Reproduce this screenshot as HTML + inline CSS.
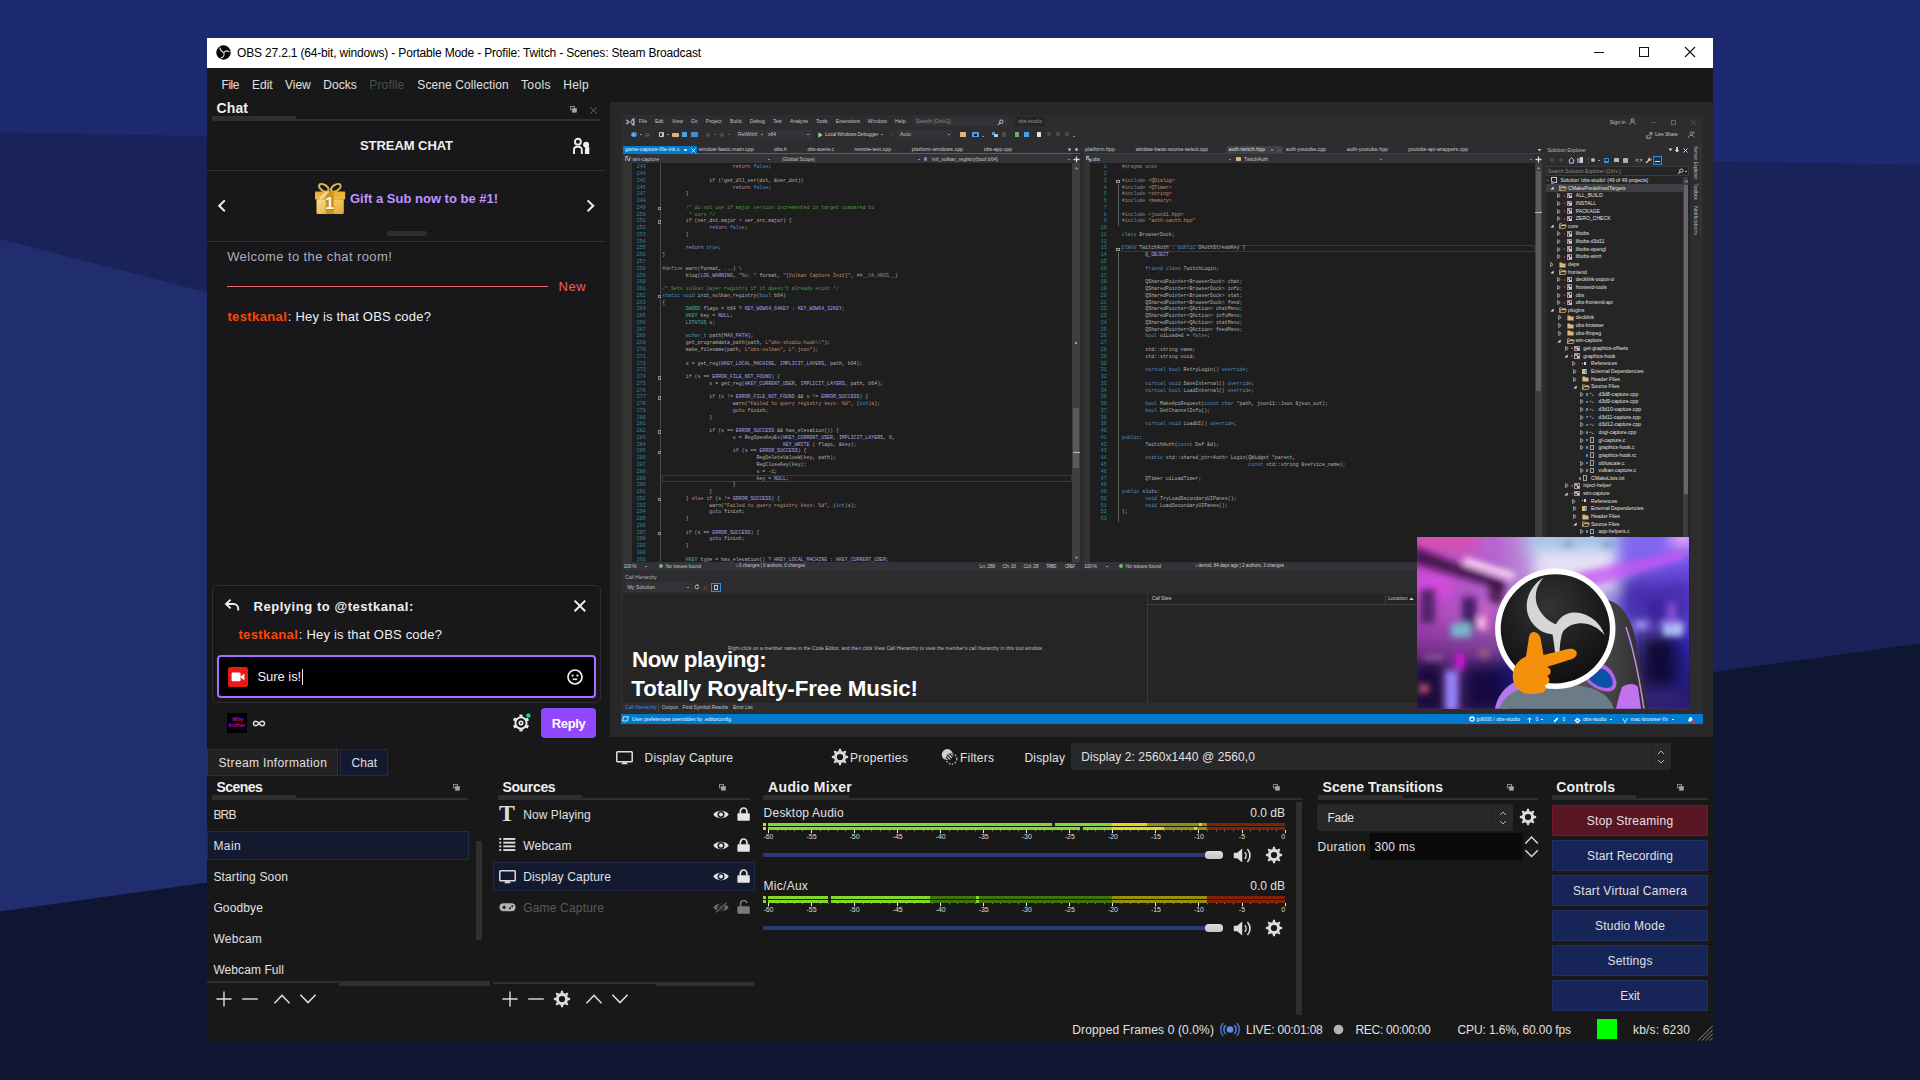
<!DOCTYPE html>
<html lang="en"><head><meta charset="utf-8"><title>OBS 27.2.1 - Twitch chat reply</title>
<style>
html,body{margin:0;padding:0;}
body{width:1920px;height:1080px;position:relative;overflow:hidden;background:#1d2970;font-family:'Liberation Sans',sans-serif;}
body div,body span.t,body svg,body pre{position:absolute;}
.t{white-space:pre;display:block;}
pre{margin:0;}
pre.code{font:4.92px/6.770px 'Liberation Mono',monospace;color:#b4b4b4;tab-size:8;-moz-tab-size:8;overflow:hidden;white-space:pre;}
pre.code i{font-style:normal;}
pre.ln{color:#2b8aa8;text-align:right;}
.cm{color:#4f9a44;}.st{color:#c08f7a;}.pp{color:#8a8a8a;}.kw{color:#4f8fc4;}.ct{color:#b88fc0;}.ty{color:#45b39c;}.mc{color:#aaa4e6;}.fn{color:#c4c49a;}.id{color:#bdbdbd;}.nu{color:#a5bc98;}

</style></head><body>
<svg width="1920" height="1080" style="left:0;top:0">
<rect width="1920" height="1080" fill="#1d2970"/>
<polygon points="0,132.6 1920,164.7 1920,1080 0,1080" fill="#19235a"/>
<polygon points="0,239 1100,523 1100,1080 0,1080" fill="#202d6e"/>
<polygon points="0,911.5 1920,643.3 1920,1080 0,1080" fill="#0e1631"/>
</svg>
<div style="left:207px;top:38px;width:1506px;height:30px;background:#fff;"></div>
<div style="left:207px;top:68px;width:1506px;height:973px;background:#181819;"></div>
<svg style="left:215.5px;top:44.5px" width="15" height="15" viewBox="-7.5 -7.5 15 15"><circle r="7.2" fill="#050505"/>
<g fill="none" stroke="#d8d8d8" stroke-width="1.1" stroke-linecap="round"><path d="M-3.6,-4.6 C-3.2,-1.8 -1.5,-0.6 0.3,0.2"/><path d="M5.6,-0.8 C3,-2.4 1.4,-1.4 0.3,0.2"/><path d="M-2.4,5.4 C0.6,4.6 0.9,2.2 0.3,0.2"/></g></svg>
<span class="t" style="left:237px;top:46.84px;font:400 12px/1 'Liberation Sans',sans-serif;color:#000;letter-spacing:-0.175px;">OBS 27.2.1 (64-bit, windows) - Portable Mode - Profile: Twitch - Scenes: Steam Broadcast</span>
<div style="left:1594px;top:52px;width:10px;height:1px;background:#111;"></div>
<div style="left:1639px;top:47px;width:10px;height:10px;background:transparent;box-sizing:border-box;border:1px solid #111;"></div>
<svg style="left:1684px;top:46px" width="12" height="12"><path d="M1,1 L11,11 M11,1 L1,11" stroke="#111" stroke-width="1.1" fill="none"/></svg>
<span class="t" style="left:221.5px;top:78.84px;font:400 12px/1 'Liberation Sans',sans-serif;color:#e1e0e1;letter-spacing:-0.441px;">File</span>
<span class="t" style="left:252px;top:78.84px;font:400 12px/1 'Liberation Sans',sans-serif;color:#e1e0e1;">Edit</span>
<span class="t" style="left:285px;top:78.84px;font:400 12px/1 'Liberation Sans',sans-serif;color:#e1e0e1;letter-spacing:-0.028px;">View</span>
<span class="t" style="left:323.3px;top:78.84px;font:400 12px/1 'Liberation Sans',sans-serif;color:#e1e0e1;letter-spacing:0.012px;">Docks</span>
<span class="t" style="left:369.3px;top:78.84px;font:400 12px/1 'Liberation Sans',sans-serif;color:#4e4e4e;letter-spacing:0.151px;">Profile</span>
<span class="t" style="left:417.3px;top:78.84px;font:400 12px/1 'Liberation Sans',sans-serif;color:#e1e0e1;letter-spacing:0.086px;">Scene Collection</span>
<span class="t" style="left:521px;top:78.84px;font:400 12px/1 'Liberation Sans',sans-serif;color:#e1e0e1;letter-spacing:0.374px;">Tools</span>
<span class="t" style="left:563.3px;top:78.84px;font:400 12px/1 'Liberation Sans',sans-serif;color:#e1e0e1;letter-spacing:0.204px;">Help</span>
<span class="t" style="left:216.5px;top:101.15px;font:700 14px/1 'Liberation Sans',sans-serif;color:#eeeeee;letter-spacing:0.107px;">Chat</span>
<div style="left:212px;top:116px;width:84px;height:5px;background:#2f2f2f;border-radius:1px 0 0 1px;"></div>
<div style="left:294px;top:118.5px;width:307px;height:2.5px;background:#2f2f2f;"></div>
<svg style="left:570px;top:105.5px" width="7" height="7" viewBox="0 0 7 7"><rect x="0.5" y="0.5" width="4" height="3.4" fill="#181819" stroke="#8a8a8a" stroke-width="1"/><rect x="2.5" y="2.6" width="4" height="3.6" fill="#a5a5a5" stroke="#a5a5a5" stroke-width="0.6"/></svg>
<svg style="left:589.5px;top:106.5px" width="7" height="7" viewBox="0 0 7 7"><path d="M0.5,0.5 L6.5,6.5 M6.5,0.5 L0.5,6.5" stroke="#6a6a6a" stroke-width="1" fill="none"/></svg>
<div style="left:207px;top:122px;width:399px;height:626px;background:#18181b;"></div>
<div style="left:207px;top:170px;width:399px;height:1px;background:#303034;"></div>
<div style="left:207px;top:241px;width:399px;height:1px;background:#303034;"></div>
<span class="t" style="left:360px;top:139px;font:700 13px/1 'Liberation Sans',sans-serif;color:#efeff1;letter-spacing:-0.061px;">STREAM CHAT</span>
<svg style="left:572px;top:137px" width="19" height="18" viewBox="0 0 19 18" fill="none" stroke="#efeff1" stroke-width="1.900">
<circle cx="5.900" cy="4.700" r="2.950"/><path d="M2,16.900 V12.800 a3.100,3.100 0 0 1 3.100,-3.100 h1.600 a3.100,3.100 0 0 1 3.100,3.100 V16.900"/>
<circle cx="14.100" cy="7.700" r="3" fill="#efeff1" stroke="none"/><path d="M12.900,16.900 V12 L14,10 h3.300 V16.900 Z" fill="#efeff1" stroke="none"/></svg>
<svg style="left:216px;top:198px" width="12" height="16" viewBox="0 0 12 16"><path d="M8.8,2.4 L3.2,7.8 L8.8,13.2" stroke="#efeff1" stroke-width="2" fill="none"/></svg>
<svg style="left:584px;top:198px" width="12" height="16" viewBox="0 0 12 16"><path d="M3.6,2.4 L9.2,7.8 L3.6,13.2" stroke="#efeff1" stroke-width="2" fill="none"/></svg>
<svg style="left:313px;top:182px" width="34" height="34" viewBox="0 0 34 34">
<defs><linearGradient id="gg" x1="0" y1="0" x2="1" y2="1"><stop offset="0" stop-color="#f8dc98"/><stop offset=".5" stop-color="#eec458"/><stop offset="1" stop-color="#e0a62c"/></linearGradient>
<linearGradient id="gl" x1="0" y1="0" x2="0" y2="1"><stop offset="0" stop-color="#e4ae38"/><stop offset="1" stop-color="#ecbc48"/></linearGradient></defs>
<g fill="none" stroke="#dcb24c" stroke-width="2.100"><ellipse cx="10.800" cy="5.800" rx="5.400" ry="3" transform="rotate(32 10.800 5.800)"/><ellipse cx="22.800" cy="5.800" rx="5.400" ry="3" transform="rotate(-32 22.800 5.800)"/></g>
<rect x="2" y="9.600" width="30.200" height="7.900" rx="0.800" fill="url(#gl)"/>
<rect x="3.500" y="17.300" width="27.300" height="14.600" rx="0.800" fill="url(#gg)"/>
<rect x="12.800" y="9.600" width="8" height="22.300" fill="#cf9422"/>
<path d="M12.800,9.600 h4 l-10,9 v-3 z" fill="#f8e8b0" opacity=".8"/>
<text x="16.700" y="27.200" font-family="'Liberation Sans',sans-serif" font-weight="700" font-size="16.500" text-anchor="middle" fill="#fffbe8" stroke="#b87a14" stroke-width="1.100" paint-order="stroke">1</text></svg>
<span class="t" style="left:350px;top:192px;font:700 13px/1 'Liberation Sans',sans-serif;color:#bf94ff;">Gift a Sub now to be #1!</span>
<div style="left:387px;top:231.3px;width:40px;height:4.4px;background:#2c2c31;border-radius:2.2px;"></div>
<span class="t" style="left:227.2px;top:250px;font:400 13px/1 'Liberation Sans',sans-serif;color:#adadb8;letter-spacing:0.396px;">Welcome to the chat room!</span>
<div style="left:227px;top:286px;width:320.5px;height:1px;background:#e26a6a;"></div>
<span class="t" style="left:558.5px;top:280px;font:400 13px/1 'Liberation Sans',sans-serif;color:#eb5e5e;letter-spacing:0.594px;">New</span>
<span class="t" style="left:227.4px;top:310px;font:700 13px/1 'Liberation Sans',sans-serif;color:#ff4500;letter-spacing:0.379px;">testkanal</span>
<span class="t" style="left:287.8px;top:310px;font:400 13px/1 'Liberation Sans',sans-serif;color:#efeff1;letter-spacing:0.198px;">: Hey is that OBS code?</span>
<div style="left:212px;top:584.5px;width:388.5px;height:118px;background:#18181b;box-sizing:border-box;border:1px solid #2e2e33;border-radius:6px;"></div>
<svg style="left:224px;top:598px" width="16" height="14" viewBox="0 0 16 14"><path d="M6.6,1.6 L2,6 L6.6,10.4 M2.4,6 H9.6 a4.6,4.6 0 0 1 4.6,4.6 V12.6" stroke="#efeff1" stroke-width="1.9" fill="none"/></svg>
<span class="t" style="left:253.5px;top:600px;font:700 13px/1 'Liberation Sans',sans-serif;color:#efeff1;letter-spacing:0.544px;">Replying to @testkanal:</span>
<svg style="left:573px;top:598.5px" width="14" height="14" viewBox="0 0 14 14"><path d="M1.6,1.6 L12.2,12.2 M12.2,1.6 L1.6,12.2" stroke="#efeff1" stroke-width="2" fill="none"/></svg>
<span class="t" style="left:238.4px;top:627.7px;font:700 13px/1 'Liberation Sans',sans-serif;color:#ff4500;letter-spacing:0.379px;">testkanal</span>
<span class="t" style="left:298.8px;top:627.7px;font:400 13px/1 'Liberation Sans',sans-serif;color:#efeff1;letter-spacing:0.198px;">: Hey is that OBS code?</span>
<div style="left:217.3px;top:655.4px;width:378.3px;height:42.2px;background:#000;box-sizing:border-box;border:2px solid #a970ff;border-radius:4px;"></div>
<div style="left:228px;top:667px;width:19.8px;height:19.8px;background:#e91916;border-radius:2.5px;"></div>
<svg style="left:228px;top:667px" width="20" height="20" viewBox="0 0 20 20"><rect x="3.6" y="5.6" width="9" height="8.6" rx="1.2" fill="#fff"/><path d="M12.2,9.9 L16.4,6.4 V13.4 Z" fill="#fff"/></svg>
<span class="t" style="left:257.4px;top:669.8px;font:400 13px/1 'Liberation Sans',sans-serif;color:#efeff1;letter-spacing:-0.037px;">Sure is!</span>
<div style="left:302.2px;top:668.5px;width:1px;height:16px;background:#e8e8ea;"></div>
<svg style="left:566px;top:667.7px" width="18" height="18" viewBox="0 0 18 18"><circle cx="9" cy="9" r="7" fill="none" stroke="#efeff1" stroke-width="1.7"/><circle cx="6.6" cy="7.6" r="1.1" fill="#efeff1"/><circle cx="11.4" cy="7.6" r="1.1" fill="#efeff1"/><path d="M6.2,10.4 a2.9,2.6 0 0 0 5.6,0 z" fill="#efeff1"/></svg>
<div style="left:227px;top:713px;width:20px;height:20px;background:#000;"></div>
<span class="t" style="left:232.2px;top:716.63px;font:700 5.4px/1 'Liberation Sans',sans-serif;color:#c000c8;">Why</span>
<span class="t" style="left:228.6px;top:723.03px;font:700 5.4px/1 'Liberation Sans',sans-serif;color:#c000c8;">bother</span>
<svg style="left:251.5px;top:719px" width="14" height="9" viewBox="0 0 14 9"><path d="M7,4.500 C5.400,1.800 1.500,1.500 1.500,4.500 C1.500,7.500 5.400,7.200 7,4.500 C8.600,1.800 12.500,1.500 12.500,4.500 C12.500,7.500 8.600,7.200 7,4.500 Z" fill="none" stroke="#dcdce0" stroke-width="1.5"/></svg>
<svg style="left:511px;top:713px" width="20" height="20" viewBox="-10 -10 20 20"><g stroke="#efeff1" fill="none"><circle r="5.600" stroke-width="1.9"/><circle r="1.700" stroke-width="1.600"/>
<g stroke-width="3.200" stroke-linecap="butt"><path d="M0,-8.400 V-6.200"/><path d="M0,8.400 V6.200"/><path d="M-7.270,-4.200 L-5.370,-3.100"/><path d="M7.270,-4.200 L5.370,-3.100"/><path d="M-7.270,4.200 L-5.370,3.100"/><path d="M7.270,4.200 L5.370,3.100"/></g></g>
<circle cx="7.400" cy="-7.400" r="2.500" fill="#00e08a" stroke="#18181b" stroke-width=".6"/></svg>
<div style="left:541px;top:708px;width:55px;height:30px;background:#9147ff;border-radius:4px;"></div>
<span class="t" style="left:551.7px;top:716.8px;font:700 13px/1 'Liberation Sans',sans-serif;color:#fff;letter-spacing:-0.312px;">Reply</span>
<div style="left:207px;top:749px;width:131px;height:27px;background:#222222;box-sizing:border-box;border:1px solid #303030;"></div>
<span class="t" style="left:218.5px;top:757.24px;font:400 12px/1 'Liberation Sans',sans-serif;color:#e1e0e1;letter-spacing:0.369px;">Stream Information</span>
<div style="left:340px;top:749px;width:48.2px;height:27px;background:#131a30;box-sizing:border-box;border:1px solid #232a48;"></div>
<span class="t" style="left:351.5px;top:757.24px;font:400 12px/1 'Liberation Sans',sans-serif;color:#e1e0e1;letter-spacing:0.097px;">Chat</span>
<div style="left:610px;top:102px;width:1103px;height:635px;background:#28282a;"></div>
<div style="left:620.5px;top:114.5px;width:1082.5px;height:610px;background:#2d2d30;"></div>
<svg style="left:624.5px;top:117px" width="10" height="10" viewBox="0 0 10 10"><path d="M0.600,3 L2,2.400 L5,5 L8,1 L9.600,1.800 V8.200 L8,9 L5,5 L2,7.600 L0.600,7 L2.600,5 Z M8,3.400 L6,5 L8,6.600 Z" fill="#a9a9a9" fill-rule="evenodd"/></svg>
<span class="t" style="left:638.7px;top:119.32px;font:400 5.1px/1 'Liberation Sans',sans-serif;color:#c4c4c4;letter-spacing:0.023px;">File</span>
<span class="t" style="left:655px;top:119.32px;font:400 5.1px/1 'Liberation Sans',sans-serif;color:#c4c4c4;letter-spacing:-0.08px;">Edit</span>
<span class="t" style="left:672px;top:119.32px;font:400 5.1px/1 'Liberation Sans',sans-serif;color:#c4c4c4;letter-spacing:0.013px;">View</span>
<span class="t" style="left:690.8px;top:119.32px;font:400 5.1px/1 'Liberation Sans',sans-serif;color:#c4c4c4;letter-spacing:0.074px;">Git</span>
<span class="t" style="left:705.8px;top:119.32px;font:400 5.1px/1 'Liberation Sans',sans-serif;color:#c4c4c4;letter-spacing:-0.025px;">Project</span>
<span class="t" style="left:730px;top:119.32px;font:400 5.1px/1 'Liberation Sans',sans-serif;color:#c4c4c4;letter-spacing:0.038px;">Build</span>
<span class="t" style="left:749.7px;top:119.32px;font:400 5.1px/1 'Liberation Sans',sans-serif;color:#c4c4c4;letter-spacing:0.063px;">Debug</span>
<span class="t" style="left:773px;top:119.32px;font:400 5.1px/1 'Liberation Sans',sans-serif;color:#c4c4c4;letter-spacing:-0.241px;">Test</span>
<span class="t" style="left:790px;top:119.32px;font:400 5.1px/1 'Liberation Sans',sans-serif;color:#c4c4c4;letter-spacing:-0.019px;">Analyze</span>
<span class="t" style="left:816px;top:119.32px;font:400 5.1px/1 'Liberation Sans',sans-serif;color:#c4c4c4;letter-spacing:-0.087px;">Tools</span>
<span class="t" style="left:835.8px;top:119.32px;font:400 5.1px/1 'Liberation Sans',sans-serif;color:#c4c4c4;letter-spacing:-0.076px;">Extensions</span>
<span class="t" style="left:867.8px;top:119.32px;font:400 5.1px/1 'Liberation Sans',sans-serif;color:#c4c4c4;letter-spacing:0.195px;">Window</span>
<span class="t" style="left:895px;top:119.32px;font:400 5.1px/1 'Liberation Sans',sans-serif;color:#c4c4c4;letter-spacing:0.147px;">Help</span>
<div style="left:913.5px;top:117.2px;width:93px;height:9.2px;background:#333337;"></div>
<span class="t" style="left:916px;top:119.32px;font:400 5.1px/1 'Liberation Sans',sans-serif;color:#8a8a8a;letter-spacing:-0.056px;">Search (Ctrl+Q)</span>
<svg style="left:997px;top:118.500px" width="7" height="7" viewBox="0 0 7 7"><circle cx="4.300" cy="2.700" r="1.700" fill="none" stroke="#d0d0d0" stroke-width="0.900"/><path d="M3,4 L0.800,6.200" stroke="#d0d0d0" stroke-width="1"/></svg>
<div style="left:1015px;top:117.2px;width:30px;height:9.2px;background:#252526;"></div>
<span class="t" style="left:1018px;top:119.32px;font:400 5.1px/1 'Liberation Sans',sans-serif;color:#9a9a9a;letter-spacing:0.051px;">obs-studio</span>
<span class="t" style="left:1609.7px;top:119.72px;font:400 5.1px/1 'Liberation Sans',sans-serif;color:#c4c4c4;letter-spacing:0.034px;">Sign in</span>
<svg style="left:1628.500px;top:118px" width="7" height="7" viewBox="0 0 7 7"><circle cx="3.500" cy="2" r="1.400" fill="none" stroke="#c8c8c8" stroke-width="0.700"/><path d="M0.800,6.500 a2.700,2.700 0 0 1 5.400,0" fill="none" stroke="#c8c8c8" stroke-width="0.700"/></svg>
<div style="left:1651px;top:122px;width:5px;height:0.6px;background:#5a5a5a;"></div>
<div style="left:1671px;top:120px;width:4.5px;height:4.5px;background:transparent;box-sizing:border-box;border:0.600px solid #6a6a6a;"></div>
<svg style="left:1690.500px;top:119.800px" width="5" height="5" viewBox="0 0 5 5"><path d="M0.300,0.300 L4.700,4.700 M4.700,0.300 L0.300,4.700" stroke="#6a6a6a" stroke-width="0.700"/></svg>
<div style="left:631px;top:132.2px;width:5.5px;height:5px;background:#3f8fd8;border-radius:3px;"></div>
<span class="t" style="left:632.5px;top:132.51px;font:700 4.5px/1 'Liberation Sans',sans-serif;color:#e8f2ff;">‹</span>
<div style="left:639.5px;top:134.4px;width:2px;height:0.8px;background:#8a8a8a;border-radius:0px;"></div>
<div style="left:645px;top:132.5px;width:4.6px;height:4.6px;background:#4a4a4f;border-radius:3px;"></div>
<div style="left:658.5px;top:131.9px;width:5px;height:5.6px;background:#c9c9c9;border-radius:1px;"></div>
<div style="left:660px;top:133.2px;width:2.2px;height:3px;background:#3a3a3a;border-radius:0px;"></div>
<div style="left:667px;top:134.4px;width:2px;height:0.8px;background:#8a8a8a;border-radius:0px;"></div>
<div style="left:672px;top:132.5px;width:6.5px;height:4.8px;background:#dcb67a;border-radius:1px;"></div>
<div style="left:682px;top:132.1px;width:5px;height:5.4px;background:#4aa0e8;border-radius:0.6px;"></div>
<div style="left:691px;top:131.9px;width:6.5px;height:5.6px;background:#3f8fd8;border-radius:0.6px;"></div>
<div style="left:705.5px;top:132.5px;width:4px;height:4.4px;background:#4c4c50;border-radius:2px;"></div>
<div style="left:714px;top:134.4px;width:2px;height:0.8px;background:#5a5a5a;border-radius:0px;"></div>
<div style="left:720px;top:132.5px;width:4px;height:4.4px;background:#4c4c50;border-radius:2px;"></div>
<div style="left:728px;top:134.4px;width:2px;height:0.8px;background:#5a5a5a;border-radius:0px;"></div>
<div style="left:736px;top:129.8px;width:28px;height:10px;background:#333337;"></div>
<span class="t" style="left:738px;top:132.22px;font:400 5.1px/1 'Liberation Sans',sans-serif;color:#c4c4c4;letter-spacing:0.033px;">RelWithI</span>
<div style="left:760.5px;top:134.4px;width:2px;height:0.9px;background:#9a9a9a;border-radius:0px;"></div>
<div style="left:766px;top:129.8px;width:46px;height:10px;background:#333337;"></div>
<span class="t" style="left:768px;top:132.22px;font:400 5.1px/1 'Liberation Sans',sans-serif;color:#c4c4c4;letter-spacing:-0.087px;">x64</span>
<div style="left:807px;top:134.4px;width:2px;height:0.9px;background:#9a9a9a;border-radius:0px;"></div>
<svg style="left:817.500px;top:131.89999999999998px" width="5" height="6" viewBox="0 0 5 6"><path d="M0.400,0.200 L4.600,3 L0.400,5.800 Z" fill="#8ae28a"/></svg>
<span class="t" style="left:825px;top:132.22px;font:400 5.1px/1 'Liberation Sans',sans-serif;color:#c4c4c4;letter-spacing:-0.235px;">Local Windows Debugger</span>
<div style="left:880.5px;top:134.4px;width:2px;height:0.9px;background:#9a9a9a;border-radius:0px;"></div>
<div style="left:890.5px;top:132.9px;width:3.6px;height:3.6px;background:#3e3e42;border-radius:2px;"></div>
<div style="left:897px;top:129.8px;width:56px;height:10px;background:#333337;"></div>
<span class="t" style="left:900px;top:132.22px;font:400 5.1px/1 'Liberation Sans',sans-serif;color:#c4c4c4;letter-spacing:0.147px;">Auto</span>
<div style="left:948px;top:134.4px;width:2px;height:0.9px;background:#9a9a9a;border-radius:0px;"></div>
<div style="left:959.5px;top:132.1px;width:6px;height:4.8px;background:#dcb67a;border-radius:0.6px;"></div>
<div style="left:972px;top:132.1px;width:6.5px;height:5px;background:#4aa0e8;border-radius:0.6px;"></div>
<div style="left:973.5px;top:133.5px;width:3.5px;height:2.2px;background:#1e1e1e;border-radius:0px;"></div>
<div style="left:982px;top:136.2px;width:2px;height:1px;background:#8a8a8a;border-radius:0px;"></div>
<div style="left:991.5px;top:132.1px;width:3px;height:3px;background:#4aa0e8;border-radius:0.5px;"></div>
<div style="left:993.5px;top:134.2px;width:4.5px;height:3px;background:#c9c9c9;border-radius:0.5px;"></div>
<div style="left:1002px;top:132.3px;width:4px;height:4.8px;background:#4a4a4f;border-radius:0.5px;"></div>
<div style="left:1015px;top:132.3px;width:4px;height:4.6px;background:#6fb06f;border-radius:0.5px;"></div>
<div style="left:1023.5px;top:132.3px;width:5.5px;height:4.6px;background:#4aa0e8;border-radius:0.5px;"></div>
<div style="left:1036.5px;top:131.7px;width:4.5px;height:5.6px;background:#e6e6e6;border-radius:0.4px;"></div>
<div style="left:1046.5px;top:132.3px;width:4px;height:4px;background:#47474c;border-radius:0.5px;"></div>
<div style="left:1055.5px;top:132.3px;width:4px;height:4px;background:#47474c;border-radius:0.5px;"></div>
<div style="left:1064.5px;top:132.3px;width:4px;height:4px;background:#47474c;border-radius:0.5px;"></div>
<div style="left:1073px;top:136.2px;width:2px;height:1px;background:#8a8a8a;border-radius:0px;"></div>
<svg style="left:1646px;top:131.7px" width="7" height="7" viewBox="0 0 7 7"><path d="M3.200,0.800 L5.800,0.800 L5.800,3.400 M5.600,1 L2.600,4" fill="none" stroke="#c8c8c8" stroke-width="0.800"/><path d="M0.800,3 V6.200 H4.600 V4.600" fill="none" stroke="#c8c8c8" stroke-width="0.800"/></svg>
<span class="t" style="left:1655px;top:132.42px;font:400 5.1px/1 'Liberation Sans',sans-serif;color:#c4c4c4;letter-spacing:-0.175px;">Live Share</span>
<svg style="left:1687px;top:130.7px" width="8" height="8" viewBox="0 0 8 8"><circle cx="4.600" cy="2.400" r="1.500" fill="none" stroke="#b8b8b8" stroke-width="0.700"/><path d="M1.400,7 a3,3 0 0 1 4,-2.600 M6.600,0.600 L7.400,2 M5.400,4.600 L7.400,6" fill="none" stroke="#b8b8b8" stroke-width="0.700"/></svg>
<div style="left:623.3px;top:145.8px;width:73.5px;height:8.5px;background:#007acc;"></div>
<span class="t" style="left:625px;top:147.42px;font:400 5.1px/1 'Liberation Sans',sans-serif;color:#f4f8fc;letter-spacing:0.114px;">game-capture-file-init.c</span>
<div style="left:684.3px;top:149.2px;width:2.4px;height:1.6px;background:#cfe6f8;border-radius:0.8px;"></div>
<svg style="left:690.800px;top:147.800px" width="5" height="5" viewBox="0 0 5 5"><path d="M0.500,0.500 L4.500,4.500 M4.500,0.500 L0.500,4.500" stroke="#eaf4fc" stroke-width="0.800"/></svg>
<span class="t" style="left:698.8px;top:147.42px;font:400 5.1px/1 'Liberation Sans',sans-serif;color:#d0d0d0;letter-spacing:0.1px;">window-basic-main.cpp</span>
<span class="t" style="left:774px;top:147.42px;font:400 5.1px/1 'Liberation Sans',sans-serif;color:#d0d0d0;letter-spacing:0.118px;">obs.h</span>
<span class="t" style="left:807.5px;top:147.42px;font:400 5.1px/1 'Liberation Sans',sans-serif;color:#d0d0d0;letter-spacing:-0.092px;">obs-scene.c</span>
<span class="t" style="left:854.5px;top:147.42px;font:400 5.1px/1 'Liberation Sans',sans-serif;color:#d0d0d0;letter-spacing:0.077px;">remote-text.cpp</span>
<span class="t" style="left:911.7px;top:147.42px;font:400 5.1px/1 'Liberation Sans',sans-serif;color:#d0d0d0;letter-spacing:0.104px;">platform-windows.cpp</span>
<span class="t" style="left:983.8px;top:147.42px;font:400 5.1px/1 'Liberation Sans',sans-serif;color:#d0d0d0;letter-spacing:0.015px;">obs-app.cpp</span>
<svg style="left:1067px;top:147.500px" width="5" height="5" viewBox="0 0 5 5"><path d="M0.600,0.600 H4.400 L2.500,3.400 Z" fill="#c0c0c0"/></svg>
<div style="left:1075px;top:147.5px;width:3.2px;height:3.4px;background:#b0b0b0;border-radius:1.6px;"></div>
<div style="left:623.3px;top:153.3px;width:456.7px;height:1.1px;background:#007acc;"></div>
<span class="t" style="left:1085px;top:147.42px;font:400 5.1px/1 'Liberation Sans',sans-serif;color:#d0d0d0;letter-spacing:0.145px;">platform.hpp</span>
<span class="t" style="left:1135.8px;top:147.42px;font:400 5.1px/1 'Liberation Sans',sans-serif;color:#d0d0d0;">window-basic-source-select.cpp</span>
<div style="left:1226.5px;top:145.8px;width:56.5px;height:8.5px;background:#3f3f46;"></div>
<span class="t" style="left:1228.5px;top:147.42px;font:400 5.1px/1 'Liberation Sans',sans-serif;color:#e0e0e0;letter-spacing:0.135px;">auth-twitch.hpp</span>
<div style="left:1270.5px;top:149.2px;width:2.2px;height:1.5px;background:#8a8a8a;border-radius:0.8px;"></div>
<svg style="left:1276.500px;top:147.800px" width="5" height="5" viewBox="0 0 5 5"><path d="M0.500,0.500 L4.500,4.500 M4.500,0.500 L0.500,4.500" stroke="#6a6a6a" stroke-width="0.700"/></svg>
<span class="t" style="left:1285.7px;top:147.42px;font:400 5.1px/1 'Liberation Sans',sans-serif;color:#d0d0d0;letter-spacing:0.06px;">auth-youtube.cpp</span>
<span class="t" style="left:1346.7px;top:147.42px;font:400 5.1px/1 'Liberation Sans',sans-serif;color:#d0d0d0;letter-spacing:0.106px;">auth-youtube.hpp</span>
<span class="t" style="left:1408px;top:147.42px;font:400 5.1px/1 'Liberation Sans',sans-serif;color:#d0d0d0;letter-spacing:0.047px;">youtube-api-wrappers.cpp</span>
<svg style="left:1537px;top:147.800px" width="5" height="5" viewBox="0 0 5 5"><path d="M0.600,0.900 H4.400 L2.500,3.400 Z" fill="#c0c0c0"/></svg>
<div style="left:1084px;top:153.3px;width:457.7px;height:1.1px;background:#3f3f46;"></div>
<div style="left:623.3px;top:154.4px;width:448.7px;height:8.9px;background:#333337;"></div>
<div style="left:1084px;top:154.4px;width:451px;height:8.9px;background:#333337;"></div>
<svg style="left:624.800px;top:156px" width="6" height="6" viewBox="0 0 6 6"><path d="M0.500,0.500 H3.400 M0.800,0.500 V5 M2,1.600 L4,5 L5.400,0.800" fill="none" stroke="#d8b8d8" stroke-width="0.900"/></svg>
<span class="t" style="left:632.5px;top:156.52px;font:400 5.1px/1 'Liberation Sans',sans-serif;color:#c4c4c4;letter-spacing:0.015px;">win-capture</span>
<div style="left:768px;top:158.7px;width:2px;height:0.9px;background:#8a8a8a;border-radius:0px;"></div>
<span class="t" style="left:782px;top:156.52px;font:400 5.1px/1 'Liberation Sans',sans-serif;color:#c4c4c4;letter-spacing:-0.073px;">(Global Scope)</span>
<div style="left:917.5px;top:158.7px;width:2px;height:0.9px;background:#8a8a8a;border-radius:0px;"></div>
<div style="left:923.5px;top:156.8px;width:3.6px;height:4px;background:#a070c8;border-radius:1.2px;"></div>
<span class="t" style="left:932px;top:156.52px;font:400 5.1px/1 'Liberation Sans',sans-serif;color:#c4c4c4;letter-spacing:-0.019px;">init_vulkan_registry(bool b64)</span>
<div style="left:1067.5px;top:158.7px;width:2px;height:0.9px;background:#8a8a8a;border-radius:0px;"></div>
<svg style="left:1072.500px;top:155.500px" width="7" height="7" viewBox="0 0 7 7"><path d="M3.500,0.500 V6.500 M0.500,3.500 H6.500" stroke="#d8d8d8" stroke-width="1.300"/></svg>
<svg style="left:1085.500px;top:156px" width="6" height="6" viewBox="0 0 6 6"><path d="M0.500,0.500 H3 M0.800,0.500 V4 M2,1.600 L3.600,4.800" fill="none" stroke="#d8d8d8" stroke-width="0.900"/><rect x="3" y="2.600" width="2.600" height="3" fill="#b080d0"/></svg>
<span class="t" style="left:1092.5px;top:156.52px;font:400 5.1px/1 'Liberation Sans',sans-serif;color:#c4c4c4;letter-spacing:-0.287px;">obs</span>
<div style="left:1228.5px;top:158.7px;width:2px;height:0.9px;background:#8a8a8a;border-radius:0px;"></div>
<div style="left:1236px;top:156.6px;width:4.6px;height:4.4px;background:#dcb67a;border-radius:1px;"></div>
<span class="t" style="left:1244px;top:156.52px;font:400 5.1px/1 'Liberation Sans',sans-serif;color:#c4c4c4;letter-spacing:-0.097px;">TwitchAuth</span>
<div style="left:1380px;top:158.7px;width:2px;height:0.9px;background:#8a8a8a;border-radius:0px;"></div>
<div style="left:1530px;top:158.7px;width:2px;height:0.9px;background:#8a8a8a;border-radius:0px;"></div>
<svg style="left:1535px;top:155.500px" width="7" height="7" viewBox="0 0 7 7"><path d="M3.500,0.500 V6.500 M0.500,3.500 H6.500" stroke="#d8d8d8" stroke-width="1.300"/></svg>
<div style="left:623.3px;top:163.3px;width:448.7px;height:398.7px;background:#1e1e1e;"></div>
<div style="left:623.3px;top:163.3px;width:8.3px;height:398.7px;background:#333333;"></div>
<div style="left:1072px;top:163.3px;width:8px;height:398.7px;background:#3e3e42;"></div>
<div style="left:1084px;top:163.3px;width:451px;height:398.7px;background:#1e1e1e;"></div>
<div style="left:1084px;top:163.3px;width:6px;height:398.7px;background:#333333;"></div>
<div style="left:1535px;top:163.3px;width:6.7px;height:398.7px;background:#3e3e42;"></div>
<svg style="left:1073.500px;top:165.500px" width="5" height="4" viewBox="0 0 5 4"><path d="M0.500,3.200 L2.500,0.800 L4.500,3.200 Z" fill="#8a8a8a"/></svg>
<svg style="left:1073.500px;top:555.500px" width="5" height="4" viewBox="0 0 5 4"><path d="M0.500,0.800 L2.500,3.200 L4.500,0.800 Z" fill="#8a8a8a"/></svg>
<div style="left:1073.2px;top:408px;width:5.6px;height:60px;background:#5a5a5e;"></div>
<div style="left:1072.5px;top:452px;width:7px;height:1.2px;background:#b8b8b8;"></div>
<div style="left:1074.8px;top:341.5px;width:2.6px;height:2.5px;background:#9a9a9a;"></div>
<svg style="left:1536px;top:165.500px" width="5" height="4" viewBox="0 0 5 4"><path d="M0.500,3.200 L2.500,0.800 L4.500,3.200 Z" fill="#8a8a8a"/></svg>
<div style="left:1536px;top:171px;width:4.7px;height:220px;background:#5a5a5e;"></div>
<div style="left:1534.5px;top:212px;width:7.5px;height:1.2px;background:#b8b8b8;"></div>
<div style="left:661.5px;top:474.8px;width:410px;height:7px;background:transparent;box-sizing:border-box;border:0.800px solid #3a3a3a;"></div>
<div style="left:1120.5px;top:245.4px;width:414px;height:7px;background:transparent;box-sizing:border-box;border:0.800px solid #3a3a3a;"></div>
<pre class="code" style="left:662.2px;top:164.31px;height:398.48px;">			<i class="ct">return</i> <i class="kw">false</i>;

		<i class="ct">if</i> (!get_dll_ver(dst, &amp;ver_dst))
			<i class="ct">return</i> <i class="kw">false</i>;
	}

	<i class="cm">/* do not use if major version incremented in target compared to</i>
	 <i class="cm">* ours */</i>
	<i class="ct">if</i> (ver_dst.major &gt; ver_src.major) {
		<i class="ct">return</i> <i class="kw">false</i>;
	}

	<i class="ct">return</i> <i class="kw">true</i>;
}

<i class="pp">#define</i> warn(format, ...) \
	blog(<i class="mc">LOG_WARNING</i>, <i class="st">"%s: "</i> format, <i class="st">"[Vulkan Capture Init]"</i>, <i class="pp">##__VA_ARGS__</i>)

<i class="cm">/* Sets vulkan layer registry if it doesn't already exist */</i>
<i class="kw">static</i> <i class="kw">void</i> init_vulkan_registry(<i class="kw">bool</i> b64)
{
	<i class="ty">DWORD</i> flags = b64 ? <i class="mc">KEY_WOW64_64KEY</i> : <i class="mc">KEY_WOW64_32KEY</i>;
	<i class="ty">HKEY</i> key = <i class="mc">NULL</i>;
	<i class="ty">LSTATUS</i> s;

	<i class="kw">wchar_t</i> path[<i class="mc">MAX_PATH</i>];
	get_programdata_path(path, <i class="st">L"obs-studio-hook\\"</i>);
	make_filename(path, <i class="st">L"obs-vulkan"</i>, <i class="st">L".json"</i>);

	s = get_reg(<i class="mc">HKEY_LOCAL_MACHINE</i>, <i class="mc">IMPLICIT_LAYERS</i>, path, b64);

	<i class="ct">if</i> (s == <i class="mc">ERROR_FILE_NOT_FOUND</i>) {
		s = get_reg(<i class="mc">HKEY_CURRENT_USER</i>, <i class="mc">IMPLICIT_LAYERS</i>, path, b64);

		<i class="ct">if</i> (s != <i class="mc">ERROR_FILE_NOT_FOUND</i> &amp;&amp; s != <i class="mc">ERROR_SUCCESS</i>) {
			warn(<i class="st">"Failed to query registry keys: %d"</i>, (<i class="kw">int</i>)s);
			<i class="ct">goto</i> finish;
		}

		<i class="ct">if</i> (s == <i class="mc">ERROR_SUCCESS</i> &amp;&amp; has_elevation()) {
			s = RegOpenKeyEx(<i class="mc">HKEY_CURRENT_USER</i>, <i class="mc">IMPLICIT_LAYERS</i>, <i class="nu">0</i>,
					 <i class="mc">KEY_WRITE</i> | flags, &amp;key);
			<i class="ct">if</i> (s == <i class="mc">ERROR_SUCCESS</i>) {
				RegDeleteValueW(key, path);
				RegCloseKey(key);
				s = -<i class="nu">1</i>;
				key = <i class="mc">NULL</i>;
			}
		}
	} <i class="ct">else</i> <i class="ct">if</i> (s != <i class="mc">ERROR_SUCCESS</i>) {
		warn(<i class="st">"Failed to query registry keys: %d"</i>, (<i class="kw">int</i>)s);
		<i class="ct">goto</i> finish;
	}

	<i class="ct">if</i> (s == <i class="mc">ERROR_SUCCESS</i>) {
		<i class="ct">goto</i> finish;
	}

	<i class="ty">HKEY</i> type = has_elevation() ? <i class="mc">HKEY_LOCAL_MACHINE</i> : <i class="mc">HKEY_CURRENT_USER</i>;</pre>
<pre class="code ln" style="left:631.6px;width:14px;top:164.31px;height:398.48px;">243
244
245
246
247
248
249
250
251
252
253
254
255
256
257
258
259
260
261
262
263
264
265
266
267
268
269
270
271
272
273
274
275
276
277
278
279
280
281
282
283
284
285
286
287
288
289
290
291
292
293
294
295
296
297
298
299
300
301</pre>
<pre class="code" style="left:1121.7px;top:164.31px;height:358.81px;"><i class="pp">#pragma once</i>

<i class="pp">#include</i><i class="st"> &lt;QDialog&gt;</i>
<i class="pp">#include</i><i class="st"> &lt;QTimer&gt;</i>
<i class="pp">#include</i><i class="st"> &lt;string&gt;</i>
<i class="pp">#include</i><i class="st"> &lt;memory&gt;</i>

<i class="pp">#include</i><i class="st"> &lt;json11.hpp&gt;</i>
<i class="pp">#include</i><i class="st"> "auth-oauth.hpp"</i>

<i class="kw">class</i> BrowserDock;

<i class="kw">class</i> TwitchAuth : <i class="kw">public</i> OAuthStreamKey {
	<i class="mc">Q_OBJECT</i>

	<i class="kw">friend</i> <i class="kw">class</i> TwitchLogin;

	QSharedPointer&lt;BrowserDock&gt; chat;
	QSharedPointer&lt;BrowserDock&gt; info;
	QSharedPointer&lt;BrowserDock&gt; stat;
	QSharedPointer&lt;BrowserDock&gt; feed;
	QSharedPointer&lt;QAction&gt; chatMenu;
	QSharedPointer&lt;QAction&gt; infoMenu;
	QSharedPointer&lt;QAction&gt; statMenu;
	QSharedPointer&lt;QAction&gt; feedMenu;
	<i class="kw">bool</i> uiLoaded = <i class="kw">false</i>;

	std::string name;
	std::string uuid;

	<i class="kw">virtual</i> <i class="kw">bool</i> RetryLogin() <i class="kw">override</i>;

	<i class="kw">virtual</i> <i class="kw">void</i> SaveInternal() <i class="kw">override</i>;
	<i class="kw">virtual</i> <i class="kw">bool</i> LoadInternal() <i class="kw">override</i>;

	<i class="kw">bool</i> MakeApiRequest(<i class="kw">const</i> <i class="kw">char</i> *path, json11::Json &amp;json_out);
	<i class="kw">bool</i> GetChannelInfo();

	<i class="kw">virtual</i> <i class="kw">void</i> LoadUI() <i class="kw">override</i>;

<i class="kw">public</i>:
	TwitchAuth(<i class="kw">const</i> Def &amp;d);

	<i class="kw">static</i> std::shared_ptr&lt;Auth&gt; Login(QWidget *parent,
					   <i class="kw">const</i> std::string &amp;service_name);

	QTimer uiLoadTimer;

<i class="kw">public</i> <i class="mc">slots</i>:
	<i class="kw">void</i> TryLoadSecondaryUIPanes();
	<i class="kw">void</i> LoadSecondaryUIPanes();
};
</pre>
<pre class="code ln" style="left:1092.6px;width:14px;top:164.31px;height:358.81px;">1
2
3
4
5
6
7
8
9
10
11
12
13
14
15
16
17
18
19
20
21
22
23
24
25
26
27
28
29
30
31
32
33
34
35
36
37
38
39
40
41
42
43
44
45
46
47
48
49
50
51
52
53</pre>
<div style="left:660px;top:163.3px;width:0.6px;height:398.7px;background:#4a4a4a;"></div>
<div style="left:1117.6px;top:183.5px;width:0.6px;height:42.5px;background:#5e5e5e;"></div>
<div style="left:1117.6px;top:251.5px;width:0.6px;height:270.5px;background:#5e5e5e;"></div>
<div style="left:657.8px;top:206.92px;width:3.4px;height:3.4px;background:#1e1e1e;box-sizing:border-box;border:0.600px solid #8a8a8a;"></div>
<div style="left:657.8px;top:220.46px;width:3.4px;height:3.4px;background:#1e1e1e;box-sizing:border-box;border:0.600px solid #8a8a8a;"></div>
<div style="left:657.8px;top:294.93px;width:3.4px;height:3.4px;background:#1e1e1e;box-sizing:border-box;border:0.600px solid #8a8a8a;"></div>
<div style="left:657.8px;top:376.17px;width:3.4px;height:3.4px;background:#1e1e1e;box-sizing:border-box;border:0.600px solid #8a8a8a;"></div>
<div style="left:657.8px;top:396.48px;width:3.4px;height:3.4px;background:#1e1e1e;box-sizing:border-box;border:0.600px solid #8a8a8a;"></div>
<div style="left:657.8px;top:430.33px;width:3.4px;height:3.4px;background:#1e1e1e;box-sizing:border-box;border:0.600px solid #8a8a8a;"></div>
<div style="left:657.8px;top:450.64px;width:3.4px;height:3.4px;background:#1e1e1e;box-sizing:border-box;border:0.600px solid #8a8a8a;"></div>
<div style="left:657.8px;top:498.03px;width:3.4px;height:3.4px;background:#1e1e1e;box-sizing:border-box;border:0.600px solid #8a8a8a;"></div>
<div style="left:657.8px;top:531.88px;width:3.4px;height:3.4px;background:#1e1e1e;box-sizing:border-box;border:0.600px solid #8a8a8a;"></div>
<div style="left:1116.2px;top:179.84px;width:3.4px;height:3.4px;background:#1e1e1e;box-sizing:border-box;border:0.600px solid #9a9a9a;"></div>
<div style="left:1116.2px;top:247.54px;width:3.4px;height:3.4px;background:#1e1e1e;box-sizing:border-box;border:0.600px solid #9a9a9a;"></div>
<div style="left:623.3px;top:562px;width:456.7px;height:7.7px;background:#333337;"></div>
<div style="left:1084px;top:562px;width:457.7px;height:7.7px;background:#333337;"></div>
<span class="t" style="left:623.5px;top:563.52px;font:400 5.1px/1 'Liberation Sans',sans-serif;color:#c4c4c4;letter-spacing:-0.323px;">100 %</span>
<div style="left:644.5px;top:565.7px;width:2px;height:0.9px;background:#9a9a9a;border-radius:0px;"></div>
<div style="left:659px;top:563.7px;width:4.4px;height:4.4px;background:#6abf6a;border-radius:2.2px;"></div>
<span class="t" style="left:665.5px;top:563.52px;font:400 5.1px/1 'Liberation Sans',sans-serif;color:#c4c4c4;letter-spacing:-0.071px;">No issues found</span>
<span class="t" style="left:736px;top:563.76px;font:400 4.6px/1 'Liberation Sans',sans-serif;color:#c8c8c8;letter-spacing:-0.049px;">‹ 0 changes | 0 authors, 0 changes</span>
<span class="t" style="left:979.5px;top:563.52px;font:400 5.1px/1 'Liberation Sans',sans-serif;color:#c4c4c4;letter-spacing:-0.231px;">Ln: 289</span>
<span class="t" style="left:1002.5px;top:563.52px;font:400 5.1px/1 'Liberation Sans',sans-serif;color:#c4c4c4;letter-spacing:-0.276px;">Ch: 16</span>
<span class="t" style="left:1023.5px;top:563.52px;font:400 5.1px/1 'Liberation Sans',sans-serif;color:#c4c4c4;letter-spacing:-0.175px;">Col: 28</span>
<span class="t" style="left:1046px;top:563.52px;font:400 5.1px/1 'Liberation Sans',sans-serif;color:#c4c4c4;letter-spacing:-0.839px;">TABS</span>
<span class="t" style="left:1065px;top:563.52px;font:400 5.1px/1 'Liberation Sans',sans-serif;color:#c4c4c4;letter-spacing:-0.946px;">CRLF</span>
<span class="t" style="left:1084px;top:563.52px;font:400 5.1px/1 'Liberation Sans',sans-serif;color:#c4c4c4;letter-spacing:-0.323px;">100 %</span>
<div style="left:1105.5px;top:565.7px;width:2px;height:0.9px;background:#9a9a9a;border-radius:0px;"></div>
<div style="left:1118.5px;top:563.7px;width:4.4px;height:4.4px;background:#6abf6a;border-radius:2.2px;"></div>
<span class="t" style="left:1125.5px;top:563.52px;font:400 5.1px/1 'Liberation Sans',sans-serif;color:#c4c4c4;letter-spacing:-0.071px;">No issues found</span>
<span class="t" style="left:1195.5px;top:563.76px;font:400 4.6px/1 'Liberation Sans',sans-serif;color:#d0d0d0;letter-spacing:-0.042px;">‹ derrod, 84 days ago | 2 authors, 3 changes</span>
<span class="t" style="left:625px;top:574.52px;font:400 5.1px/1 'Liberation Sans',sans-serif;color:#b0b0b0;letter-spacing:-0.037px;">Call Hierarchy</span>
<div style="left:625px;top:582px;width:68px;height:10px;background:#333337;"></div>
<span class="t" style="left:627.5px;top:584.52px;font:400 5.1px/1 'Liberation Sans',sans-serif;color:#c4c4c4;letter-spacing:0.083px;">My Solution</span>
<div style="left:687px;top:586.7px;width:2px;height:0.9px;background:#9a9a9a;border-radius:0px;"></div>
<svg style="left:694px;top:584px" width="6" height="6" viewBox="0 0 6 6"><path d="M4.800,3 a1.900,1.900 0 1 1 -0.800,-1.600" fill="none" stroke="#c8c8c8" stroke-width="0.900"/><path d="M3.400,0.300 L5.200,1.200 L3.800,2.500 Z" fill="#c8c8c8"/></svg>
<svg style="left:703px;top:584.500px" width="5" height="5" viewBox="0 0 5 5"><path d="M0.500,0.500 L4.500,4.500 M4.500,0.500 L0.500,4.500" stroke="#7a4a44" stroke-width="0.900"/></svg>
<div style="left:711px;top:583px;width:9.5px;height:8.5px;background:#26323c;box-sizing:border-box;border:0.700px solid #2f8fd8;"></div>
<div style="left:714px;top:585px;width:3.6px;height:4.6px;background:transparent;box-sizing:border-box;border:0.700px solid #c8c8c8;"></div>
<div style="left:623.3px;top:593.7px;width:1066.7px;height:109.1px;background:#252526;"></div>
<div style="left:1147.3px;top:593.7px;width:0.9px;height:109.1px;background:#3a3a3d;"></div>
<div style="left:1148.2px;top:603.5px;width:541.8px;height:0.7px;background:#3f3f44;"></div>
<div style="left:1385.2px;top:594.5px;width:0.6px;height:9px;background:#3f3f44;"></div>
<span class="t" style="left:1151.7px;top:596.32px;font:400 5.1px/1 'Liberation Sans',sans-serif;color:#c4c4c4;letter-spacing:-0.181px;">Call Sites</span>
<span class="t" style="left:1388px;top:596.32px;font:400 5.1px/1 'Liberation Sans',sans-serif;color:#c4c4c4;letter-spacing:0.031px;">Location</span>
<svg style="left:1409px;top:597px" width="5" height="4" viewBox="0 0 5 4"><path d="M0.300,3 L2.500,0.600 L4.700,3 Z" fill="#d8d8d8"/></svg>
<span class="t" style="left:728px;top:646.66px;font:400 4.8px/1 'Liberation Sans',sans-serif;color:#c0c0c0;letter-spacing:0.129px;">Right-click on a member name in the Code Editor, and then click View Call Hierarchy to view the member's call hierarchy in this tool window.</span>
<span class="t" style="left:625px;top:704.82px;font:400 5.1px/1 'Liberation Sans',sans-serif;color:#2f8fe0;letter-spacing:-0.037px;">Call Hierarchy</span>
<div style="left:657.8px;top:704px;width:0.6px;height:7px;background:#4a4a4e;"></div>
<span class="t" style="left:661.7px;top:704.82px;font:400 5.1px/1 'Liberation Sans',sans-serif;color:#c4c4c4;letter-spacing:0.182px;">Output</span>
<span class="t" style="left:682.6px;top:704.82px;font:400 5.1px/1 'Liberation Sans',sans-serif;color:#c4c4c4;letter-spacing:-0.071px;">Find Symbol Results</span>
<span class="t" style="left:733px;top:704.82px;font:400 5.1px/1 'Liberation Sans',sans-serif;color:#c4c4c4;letter-spacing:-0.123px;">Error List</span>
<div style="left:620.5px;top:714.4px;width:1082.5px;height:9.9px;background:#007acc;"></div>
<svg style="left:622px;top:716.300px" width="7" height="6" viewBox="0 0 7 6"><path d="M1.600,0.800 H6.400 L5.400,5 H0.600 Z" fill="none" stroke="#fff" stroke-width="0.800"/></svg>
<span class="t" style="left:632px;top:717.02px;font:400 5.1px/1 'Liberation Sans',sans-serif;color:#f2f8fd;letter-spacing:-0.035px;">User preferences overridden by .editorconfig</span>
<svg style="left:1468.500px;top:716.300px" width="6" height="6" viewBox="0 0 6 6"><circle cx="3" cy="3" r="2.800" fill="#f2f8fd"/><circle cx="3" cy="3.300" r="1.300" fill="#007acc"/></svg>
<span class="t" style="left:1476.4px;top:717.02px;font:400 5.1px/1 'Liberation Sans',sans-serif;color:#f2f8fd;letter-spacing:0.03px;">jp9000 / obs-studio</span>
<svg style="left:1526.500px;top:716.800px" width="5" height="6" viewBox="0 0 5 6"><path d="M2.500,5.600 V1 M0.600,2.800 L2.500,0.800 L4.400,2.800" fill="none" stroke="#fff" stroke-width="0.900"/></svg>
<span class="t" style="left:1535.5px;top:717.02px;font:400 5.1px/1 'Liberation Sans',sans-serif;color:#f2f8fd;">0</span>
<div style="left:1540.5px;top:719.3px;width:2px;height:0.9px;background:#e0f0ff;border-radius:0px;"></div>
<svg style="left:1552.500px;top:716.800px" width="6" height="6" viewBox="0 0 6 6"><path d="M0.600,5.400 L1.200,3.600 L4.200,0.600 L5.400,1.800 L2.400,4.800 Z" fill="#fff"/></svg>
<span class="t" style="left:1562.5px;top:717.02px;font:400 5.1px/1 'Liberation Sans',sans-serif;color:#f2f8fd;">0</span>
<svg style="left:1573.500px;top:716.500px" width="7" height="7" viewBox="0 0 7 7"><path d="M3.500,0.400 L6.600,3.500 L3.500,6.600 L0.400,3.500 Z" fill="#fff"/><circle cx="3.500" cy="3.500" r="1" fill="#007acc"/></svg>
<span class="t" style="left:1583px;top:717.02px;font:400 5.1px/1 'Liberation Sans',sans-serif;color:#f2f8fd;">obs-studio</span>
<div style="left:1610px;top:719.3px;width:2px;height:0.9px;background:#e0f0ff;border-radius:0px;"></div>
<svg style="left:1621.500px;top:716.500px" width="6" height="7" viewBox="0 0 6 7"><path d="M1.200,1.200 V3 L3,4.400 V6.400 M4.800,1.200 V3 L3,4.400" fill="none" stroke="#fff" stroke-width="0.800"/></svg>
<span class="t" style="left:1630.5px;top:717.02px;font:400 5.1px/1 'Liberation Sans',sans-serif;color:#f2f8fd;letter-spacing:0.087px;">mac-browser-fix</span>
<div style="left:1671.5px;top:719.3px;width:2px;height:0.9px;background:#e0f0ff;border-radius:0px;"></div>
<svg style="left:1686.500px;top:716px" width="8" height="8" viewBox="0 0 8 8"><path d="M1,5.400 C2,4.400 1.600,1 3.600,1 C5.600,1 5.200,4.400 6.200,5.400 Z" fill="#f2f8fd"/><circle cx="5.800" cy="5.600" r="1.700" fill="#e0383e"/></svg>
<div style="left:1545.8px;top:145.8px;width:144.2px;height:556.2px;background:#252526;"></div>
<div style="left:1545.8px;top:145.8px;width:144.2px;height:8.6px;background:#2d2d30;"></div>
<span class="t" style="left:1547.5px;top:147.72px;font:400 5.1px/1 'Liberation Sans',sans-serif;color:#b8b8b8;letter-spacing:-0.018px;">Solution Explorer</span>
<svg style="left:1668px;top:148.200px" width="5" height="4" viewBox="0 0 5 4"><path d="M0.400,0.600 H4.600 L2.500,3.200 Z" fill="#d0d0d0"/></svg>
<div style="left:1676.3px;top:147.3px;width:1.6px;height:4.7px;background:#d0d0d0;"></div>
<div style="left:1675.3px;top:150px;width:3.6px;height:0.8px;background:#d0d0d0;"></div>
<svg style="left:1682.500px;top:147.600px" width="5" height="5" viewBox="0 0 5 5"><path d="M0.500,0.500 L4.500,4.500 M4.500,0.500 L0.500,4.500" stroke="#e0e0e0" stroke-width="0.900"/></svg>
<div style="left:1545.8px;top:154.4px;width:144.2px;height:11.9px;background:#2d2d30;"></div>
<div style="left:1549.5px;top:158px;width:4.4px;height:4.4px;background:#47474c;border-radius:2.2px;"></div>
<div style="left:1558.5px;top:158px;width:4.4px;height:4.4px;background:#47474c;border-radius:2.2px;"></div>
<svg style="left:1567.500px;top:157px" width="7" height="7" viewBox="0 0 7 7"><path d="M0.600,3.600 L3.500,0.800 L6.400,3.600 M1.600,3.200 V6.200 H5.400 V3.200" fill="none" stroke="#d0d0d0" stroke-width="0.900"/></svg>
<div style="left:1577px;top:157.5px;width:3.6px;height:5px;background:#9a6ad0;border-radius:0.5px;"></div>
<div style="left:1580px;top:157px;width:2.6px;height:6px;background:#d0d0d0;border-radius:0.4px;"></div>
<div style="left:1587.8px;top:156.5px;width:0.6px;height:7.5px;background:#46464a;"></div>
<div style="left:1590.5px;top:158px;width:4px;height:4.4px;background:#b8b8b8;border-radius:2px;"></div>
<div style="left:1597.5px;top:160px;width:2px;height:0.9px;background:#9a9a9a;border-radius:0px;"></div>
<div style="left:1603.5px;top:157.5px;width:5.6px;height:5.4px;background:#3f8fd8;border-radius:0.8px;"></div>
<div style="left:1605px;top:159px;width:2.6px;height:2.2px;background:#252526;border-radius:0px;"></div>
<div style="left:1614px;top:158px;width:4.6px;height:4.4px;background:#b8b8b8;border-radius:0.6px;"></div>
<div style="left:1623px;top:157.5px;width:5px;height:5.4px;background:#b0b0b0;border-radius:1px;"></div>
<span class="t" style="left:1635.5px;top:157.87px;font:700 5px/1 'Liberation Sans',sans-serif;color:#d0d0d0;letter-spacing:1.104px;">&lt;&gt;</span>
<svg style="left:1644.500px;top:157px" width="7" height="7" viewBox="0 0 7 7"><path d="M1,6 L4,3" stroke="#d0d0d0" stroke-width="1.200"/><circle cx="4.800" cy="2.200" r="1.600" fill="#d0d0d0"/><circle cx="5.400" cy="1.600" r="0.800" fill="#2d2d30"/></svg>
<div style="left:1652.5px;top:155.8px;width:9.5px;height:9px;background:#26323c;box-sizing:border-box;border:0.700px solid #2f8fd8;"></div>
<div style="left:1655px;top:161px;width:5px;height:0.9px;background:#e0e0e0;"></div>
<div style="left:1546.3px;top:166.3px;width:143.2px;height:9.9px;background:#252526;box-sizing:border-box;border:0.600px solid #3a3a3f;"></div>
<span class="t" style="left:1547.8px;top:168.52px;font:400 5.1px/1 'Liberation Sans',sans-serif;color:#8f8f8f;letter-spacing:-0.008px;">Search Solution Explorer (Ctrl+;)</span>
<svg style="left:1677px;top:167.800px" width="7" height="7" viewBox="0 0 7 7"><circle cx="4.300" cy="2.700" r="1.700" fill="none" stroke="#d0d0d0" stroke-width="0.900"/><path d="M3,4 L0.800,6.200" stroke="#d0d0d0" stroke-width="1"/></svg>
<div style="left:1685.3px;top:170.6px;width:2px;height:0.9px;background:#b0b0b0;border-radius:0px;"></div>
<div style="left:1545.8px;top:184.22px;width:137.5px;height:7.64px;background:#3f3f46;"></div>
<div style="left:1547.3px;top:179.5px;width:1.9px;height:1.9px;background:#e0383e;border-radius:1px;"></div>
<div style="left:1551.2px;top:177.4px;width:6px;height:5.4px;background:transparent;box-sizing:border-box;border:0.800px solid #c8c8c8;"></div>
<div style="left:1550.8px;top:180.6px;width:3.2px;height:3.2px;background:#9a6ad0;border-radius:0.4px;"></div>
<span class="t" style="left:1560.5px;top:178.02px;font:400 5.1px/1 'Liberation Sans',sans-serif;color:#e2e2e2;">Solution 'obs-studio' (49 of 49 projects)</span>
<svg style="left:1549.82px;top:186.23px" width="4" height="4" viewBox="0 0 4 4"><path d="M3.600,0.400 V3.600 H0.400 Z" fill="#e8e8e8"/></svg>
<svg style="left:1559.12px;top:185.23px" width="8" height="6" viewBox="0 0 8 6"><path d="M0.600,5.400 V0.800 H2.800 L3.600,1.600 H6.400 V2.600 H1.800 L0.600,5.400 H6.200 L7.400,2.600 H1.800" fill="none" stroke="#dcb67a" stroke-width="0.800"/></svg>
<span class="t" style="left:1568.12px;top:185.65px;font:400 5.1px/1 'Liberation Sans',sans-serif;color:#e2e2e2;">CMakePredefinedTargets</span>
<svg style="left:1557.04px;top:193.27px" width="4" height="5" viewBox="0 0 4 5"><path d="M0.700,0.500 L3.200,2.500 L0.700,4.500 Z" fill="none" stroke="#d8d8d8" stroke-width="0.700"/></svg>
<div style="left:1563.54px;top:194.77px;width:1.9px;height:1.9px;background:#e0383e;border-radius:1px;"></div>
<div style="left:1566.74px;top:192.87px;width:5.6px;height:5.6px;background:#2a2a2c;box-sizing:border-box;border:0.600px solid #9c9c9c;"></div>
<div style="left:1567.54px;top:193.67px;width:2.6px;height:2.4px;background:#c586c0;border-radius:0px;"></div>
<div style="left:1569.34px;top:195.67px;width:2.2px;height:2px;background:#c8c8c8;border-radius:0px;"></div>
<span class="t" style="left:1575.74px;top:193.29px;font:400 5.1px/1 'Liberation Sans',sans-serif;color:#e2e2e2;">ALL_BUILD</span>
<svg style="left:1557.04px;top:200.91px" width="4" height="5" viewBox="0 0 4 5"><path d="M0.700,0.500 L3.200,2.500 L0.700,4.500 Z" fill="none" stroke="#d8d8d8" stroke-width="0.700"/></svg>
<div style="left:1563.54px;top:202.41px;width:1.9px;height:1.9px;background:#e0383e;border-radius:1px;"></div>
<div style="left:1566.74px;top:200.5px;width:5.6px;height:5.6px;background:#2a2a2c;box-sizing:border-box;border:0.600px solid #9c9c9c;"></div>
<div style="left:1567.54px;top:201.31px;width:2.6px;height:2.4px;background:#c586c0;border-radius:0px;"></div>
<div style="left:1569.34px;top:203.31px;width:2.2px;height:2px;background:#c8c8c8;border-radius:0px;"></div>
<span class="t" style="left:1575.74px;top:200.92px;font:400 5.1px/1 'Liberation Sans',sans-serif;color:#e2e2e2;">INSTALL</span>
<svg style="left:1557.04px;top:208.54px" width="4" height="5" viewBox="0 0 4 5"><path d="M0.700,0.500 L3.200,2.500 L0.700,4.500 Z" fill="none" stroke="#d8d8d8" stroke-width="0.700"/></svg>
<div style="left:1563.54px;top:210.04px;width:1.9px;height:1.9px;background:#e0383e;border-radius:1px;"></div>
<div style="left:1566.74px;top:208.14px;width:5.6px;height:5.6px;background:#2a2a2c;box-sizing:border-box;border:0.600px solid #9c9c9c;"></div>
<div style="left:1567.54px;top:208.94px;width:2.6px;height:2.4px;background:#c586c0;border-radius:0px;"></div>
<div style="left:1569.34px;top:210.94px;width:2.2px;height:2px;background:#c8c8c8;border-radius:0px;"></div>
<span class="t" style="left:1575.74px;top:208.56px;font:400 5.1px/1 'Liberation Sans',sans-serif;color:#e2e2e2;">PACKAGE</span>
<svg style="left:1557.04px;top:216.17px" width="4" height="5" viewBox="0 0 4 5"><path d="M0.700,0.500 L3.200,2.500 L0.700,4.500 Z" fill="none" stroke="#d8d8d8" stroke-width="0.700"/></svg>
<div style="left:1563.54px;top:217.67px;width:1.9px;height:1.9px;background:#e0383e;border-radius:1px;"></div>
<div style="left:1566.74px;top:215.77px;width:5.6px;height:5.6px;background:#2a2a2c;box-sizing:border-box;border:0.600px solid #9c9c9c;"></div>
<div style="left:1567.54px;top:216.57px;width:2.6px;height:2.4px;background:#c586c0;border-radius:0px;"></div>
<div style="left:1569.34px;top:218.57px;width:2.2px;height:2px;background:#c8c8c8;border-radius:0px;"></div>
<span class="t" style="left:1575.74px;top:216.19px;font:400 5.1px/1 'Liberation Sans',sans-serif;color:#e2e2e2;">ZERO_CHECK</span>
<svg style="left:1549.82px;top:224.41px" width="4" height="4" viewBox="0 0 4 4"><path d="M3.600,0.400 V3.600 H0.400 Z" fill="#e8e8e8"/></svg>
<svg style="left:1559.12px;top:223.41px" width="8" height="6" viewBox="0 0 8 6"><path d="M0.600,5.400 V0.800 H2.800 L3.600,1.600 H6.400 V2.600 H1.800 L0.600,5.400 H6.200 L7.400,2.600 H1.800" fill="none" stroke="#dcb67a" stroke-width="0.800"/></svg>
<span class="t" style="left:1568.12px;top:223.83px;font:400 5.1px/1 'Liberation Sans',sans-serif;color:#e2e2e2;">core</span>
<svg style="left:1557.04px;top:231.44px" width="4" height="5" viewBox="0 0 4 5"><path d="M0.700,0.500 L3.200,2.500 L0.700,4.500 Z" fill="none" stroke="#d8d8d8" stroke-width="0.700"/></svg>
<div style="left:1563.54px;top:232.94px;width:1.9px;height:1.9px;background:#e0383e;border-radius:1px;"></div>
<div style="left:1566.74px;top:231.04px;width:5.6px;height:5.6px;background:#2a2a2c;box-sizing:border-box;border:0.600px solid #9c9c9c;"></div>
<div style="left:1567.54px;top:231.84px;width:2.6px;height:2.4px;background:#c586c0;border-radius:0px;"></div>
<div style="left:1569.34px;top:233.84px;width:2.2px;height:2px;background:#c8c8c8;border-radius:0px;"></div>
<span class="t" style="left:1575.74px;top:231.46px;font:400 5.1px/1 'Liberation Sans',sans-serif;color:#e2e2e2;">libobs</span>
<svg style="left:1557.04px;top:239.08px" width="4" height="5" viewBox="0 0 4 5"><path d="M0.700,0.500 L3.200,2.500 L0.700,4.500 Z" fill="none" stroke="#d8d8d8" stroke-width="0.700"/></svg>
<div style="left:1563.54px;top:240.58px;width:1.9px;height:1.9px;background:#e0383e;border-radius:1px;"></div>
<div style="left:1566.74px;top:238.68px;width:5.6px;height:5.6px;background:#2a2a2c;box-sizing:border-box;border:0.600px solid #9c9c9c;"></div>
<div style="left:1567.54px;top:239.48px;width:2.6px;height:2.4px;background:#c586c0;border-radius:0px;"></div>
<div style="left:1569.34px;top:241.48px;width:2.2px;height:2px;background:#c8c8c8;border-radius:0px;"></div>
<span class="t" style="left:1575.74px;top:239.1px;font:400 5.1px/1 'Liberation Sans',sans-serif;color:#e2e2e2;">libobs-d3d11</span>
<svg style="left:1557.04px;top:246.72px" width="4" height="5" viewBox="0 0 4 5"><path d="M0.700,0.500 L3.200,2.500 L0.700,4.500 Z" fill="none" stroke="#d8d8d8" stroke-width="0.700"/></svg>
<div style="left:1563.54px;top:248.22px;width:1.9px;height:1.9px;background:#e0383e;border-radius:1px;"></div>
<div style="left:1566.74px;top:246.31px;width:5.6px;height:5.6px;background:#2a2a2c;box-sizing:border-box;border:0.600px solid #9c9c9c;"></div>
<div style="left:1567.54px;top:247.12px;width:2.6px;height:2.4px;background:#c586c0;border-radius:0px;"></div>
<div style="left:1569.34px;top:249.12px;width:2.2px;height:2px;background:#c8c8c8;border-radius:0px;"></div>
<span class="t" style="left:1575.74px;top:246.73px;font:400 5.1px/1 'Liberation Sans',sans-serif;color:#e2e2e2;">libobs-opengl</span>
<svg style="left:1557.04px;top:254.35px" width="4" height="5" viewBox="0 0 4 5"><path d="M0.700,0.500 L3.200,2.500 L0.700,4.500 Z" fill="none" stroke="#d8d8d8" stroke-width="0.700"/></svg>
<div style="left:1563.54px;top:255.85px;width:1.9px;height:1.9px;background:#e0383e;border-radius:1px;"></div>
<div style="left:1566.74px;top:253.95px;width:5.6px;height:5.6px;background:#2a2a2c;box-sizing:border-box;border:0.600px solid #9c9c9c;"></div>
<div style="left:1567.54px;top:254.75px;width:2.6px;height:2.4px;background:#c586c0;border-radius:0px;"></div>
<div style="left:1569.34px;top:256.75px;width:2.2px;height:2px;background:#c8c8c8;border-radius:0px;"></div>
<span class="t" style="left:1575.74px;top:254.37px;font:400 5.1px/1 'Liberation Sans',sans-serif;color:#e2e2e2;">libobs-winrt</span>
<svg style="left:1550.12px;top:261.99px" width="4" height="5" viewBox="0 0 4 5"><path d="M0.700,0.500 L3.200,2.500 L0.700,4.500 Z" fill="none" stroke="#d8d8d8" stroke-width="0.700"/></svg>
<svg style="left:1559.32px;top:261.58px" width="7" height="6" viewBox="0 0 7 6"><path d="M0.400,5.600 V0.600 H2.800 L3.600,1.500 H6.600 V5.600 Z" fill="#dcb67a"/></svg>
<span class="t" style="left:1568.12px;top:262px;font:400 5.1px/1 'Liberation Sans',sans-serif;color:#e2e2e2;">deps</span>
<svg style="left:1549.82px;top:270.22px" width="4" height="4" viewBox="0 0 4 4"><path d="M3.600,0.400 V3.600 H0.400 Z" fill="#e8e8e8"/></svg>
<svg style="left:1559.12px;top:269.22px" width="8" height="6" viewBox="0 0 8 6"><path d="M0.600,5.400 V0.800 H2.800 L3.600,1.600 H6.400 V2.600 H1.800 L0.600,5.400 H6.200 L7.400,2.600 H1.800" fill="none" stroke="#dcb67a" stroke-width="0.800"/></svg>
<span class="t" style="left:1568.12px;top:269.64px;font:400 5.1px/1 'Liberation Sans',sans-serif;color:#e2e2e2;">frontend</span>
<svg style="left:1557.04px;top:277.25px" width="4" height="5" viewBox="0 0 4 5"><path d="M0.700,0.500 L3.200,2.500 L0.700,4.500 Z" fill="none" stroke="#d8d8d8" stroke-width="0.700"/></svg>
<div style="left:1563.54px;top:278.75px;width:1.9px;height:1.9px;background:#e0383e;border-radius:1px;"></div>
<div style="left:1566.74px;top:276.85px;width:5.6px;height:5.6px;background:#2a2a2c;box-sizing:border-box;border:0.600px solid #9c9c9c;"></div>
<div style="left:1567.54px;top:277.65px;width:2.6px;height:2.4px;background:#c586c0;border-radius:0px;"></div>
<div style="left:1569.34px;top:279.65px;width:2.2px;height:2px;background:#c8c8c8;border-radius:0px;"></div>
<span class="t" style="left:1575.74px;top:277.27px;font:400 5.1px/1 'Liberation Sans',sans-serif;color:#e2e2e2;">decklink-ouput-ui</span>
<svg style="left:1557.04px;top:284.89px" width="4" height="5" viewBox="0 0 4 5"><path d="M0.700,0.500 L3.200,2.500 L0.700,4.500 Z" fill="none" stroke="#d8d8d8" stroke-width="0.700"/></svg>
<div style="left:1563.54px;top:286.39px;width:1.9px;height:1.9px;background:#e0383e;border-radius:1px;"></div>
<div style="left:1566.74px;top:284.49px;width:5.6px;height:5.6px;background:#2a2a2c;box-sizing:border-box;border:0.600px solid #9c9c9c;"></div>
<div style="left:1567.54px;top:285.29px;width:2.6px;height:2.4px;background:#c586c0;border-radius:0px;"></div>
<div style="left:1569.34px;top:287.29px;width:2.2px;height:2px;background:#c8c8c8;border-radius:0px;"></div>
<span class="t" style="left:1575.74px;top:284.91px;font:400 5.1px/1 'Liberation Sans',sans-serif;color:#e2e2e2;">frontend-tools</span>
<svg style="left:1557.04px;top:292.53px" width="4" height="5" viewBox="0 0 4 5"><path d="M0.700,0.500 L3.200,2.500 L0.700,4.500 Z" fill="none" stroke="#d8d8d8" stroke-width="0.700"/></svg>
<div style="left:1563.54px;top:294.03px;width:1.9px;height:1.9px;background:#e0383e;border-radius:1px;"></div>
<div style="left:1566.74px;top:292.12px;width:5.6px;height:5.6px;background:#2a2a2c;box-sizing:border-box;border:0.600px solid #9c9c9c;"></div>
<div style="left:1567.54px;top:292.93px;width:2.6px;height:2.4px;background:#c586c0;border-radius:0px;"></div>
<div style="left:1569.34px;top:294.93px;width:2.2px;height:2px;background:#c8c8c8;border-radius:0px;"></div>
<span class="t" style="left:1575.74px;top:292.54px;font:400 5.1px/1 'Liberation Sans',sans-serif;color:#e2e2e2;">obs</span>
<svg style="left:1557.04px;top:300.16px" width="4" height="5" viewBox="0 0 4 5"><path d="M0.700,0.500 L3.200,2.500 L0.700,4.500 Z" fill="none" stroke="#d8d8d8" stroke-width="0.700"/></svg>
<div style="left:1563.54px;top:301.66px;width:1.9px;height:1.9px;background:#e0383e;border-radius:1px;"></div>
<div style="left:1566.74px;top:299.76px;width:5.6px;height:5.6px;background:#2a2a2c;box-sizing:border-box;border:0.600px solid #9c9c9c;"></div>
<div style="left:1567.54px;top:300.56px;width:2.6px;height:2.4px;background:#c586c0;border-radius:0px;"></div>
<div style="left:1569.34px;top:302.56px;width:2.2px;height:2px;background:#c8c8c8;border-radius:0px;"></div>
<span class="t" style="left:1575.74px;top:300.18px;font:400 5.1px/1 'Liberation Sans',sans-serif;color:#e2e2e2;">obs-frontend-api</span>
<svg style="left:1549.82px;top:308.39px" width="4" height="4" viewBox="0 0 4 4"><path d="M3.600,0.400 V3.600 H0.400 Z" fill="#e8e8e8"/></svg>
<svg style="left:1559.12px;top:307.39px" width="8" height="6" viewBox="0 0 8 6"><path d="M0.600,5.400 V0.800 H2.800 L3.600,1.600 H6.400 V2.600 H1.800 L0.600,5.400 H6.200 L7.400,2.600 H1.800" fill="none" stroke="#dcb67a" stroke-width="0.800"/></svg>
<span class="t" style="left:1568.12px;top:307.81px;font:400 5.1px/1 'Liberation Sans',sans-serif;color:#e2e2e2;">plugins</span>
<svg style="left:1557.74px;top:315.43px" width="4" height="5" viewBox="0 0 4 5"><path d="M0.700,0.500 L3.200,2.500 L0.700,4.500 Z" fill="none" stroke="#d8d8d8" stroke-width="0.700"/></svg>
<svg style="left:1566.94px;top:315.03px" width="7" height="6" viewBox="0 0 7 6"><path d="M0.400,5.600 V0.600 H2.800 L3.600,1.500 H6.600 V5.600 Z" fill="#dcb67a"/></svg>
<span class="t" style="left:1575.74px;top:315.45px;font:400 5.1px/1 'Liberation Sans',sans-serif;color:#e2e2e2;">decklink</span>
<svg style="left:1557.74px;top:323.07px" width="4" height="5" viewBox="0 0 4 5"><path d="M0.700,0.500 L3.200,2.500 L0.700,4.500 Z" fill="none" stroke="#d8d8d8" stroke-width="0.700"/></svg>
<svg style="left:1566.94px;top:322.67px" width="7" height="6" viewBox="0 0 7 6"><path d="M0.400,5.600 V0.600 H2.800 L3.600,1.500 H6.600 V5.600 Z" fill="#dcb67a"/></svg>
<span class="t" style="left:1575.74px;top:323.08px;font:400 5.1px/1 'Liberation Sans',sans-serif;color:#e2e2e2;">obs-browser</span>
<svg style="left:1557.74px;top:330.7px" width="4" height="5" viewBox="0 0 4 5"><path d="M0.700,0.500 L3.200,2.500 L0.700,4.500 Z" fill="none" stroke="#d8d8d8" stroke-width="0.700"/></svg>
<svg style="left:1566.94px;top:330.3px" width="7" height="6" viewBox="0 0 7 6"><path d="M0.400,5.600 V0.600 H2.800 L3.600,1.500 H6.600 V5.600 Z" fill="#dcb67a"/></svg>
<span class="t" style="left:1575.74px;top:330.72px;font:400 5.1px/1 'Liberation Sans',sans-serif;color:#e2e2e2;">obs-ffmpeg</span>
<svg style="left:1557.44px;top:338.94px" width="4" height="4" viewBox="0 0 4 4"><path d="M3.600,0.400 V3.600 H0.400 Z" fill="#e8e8e8"/></svg>
<svg style="left:1566.74px;top:337.94px" width="8" height="6" viewBox="0 0 8 6"><path d="M0.600,5.400 V0.800 H2.800 L3.600,1.600 H6.400 V2.600 H1.800 L0.600,5.400 H6.200 L7.400,2.600 H1.800" fill="none" stroke="#dcb67a" stroke-width="0.800"/></svg>
<span class="t" style="left:1575.74px;top:338.35px;font:400 5.1px/1 'Liberation Sans',sans-serif;color:#e2e2e2;">win-capture</span>
<svg style="left:1564.66px;top:345.97px" width="4" height="5" viewBox="0 0 4 5"><path d="M0.700,0.500 L3.200,2.500 L0.700,4.500 Z" fill="none" stroke="#d8d8d8" stroke-width="0.700"/></svg>
<div style="left:1571.16px;top:347.47px;width:1.9px;height:1.9px;background:#e0383e;border-radius:1px;"></div>
<div style="left:1574.36px;top:345.57px;width:5.6px;height:5.6px;background:#2a2a2c;box-sizing:border-box;border:0.600px solid #9c9c9c;"></div>
<div style="left:1575.16px;top:346.37px;width:2.6px;height:2.4px;background:#c586c0;border-radius:0px;"></div>
<div style="left:1576.96px;top:348.37px;width:2.2px;height:2px;background:#c8c8c8;border-radius:0px;"></div>
<span class="t" style="left:1583.36px;top:345.99px;font:400 5.1px/1 'Liberation Sans',sans-serif;color:#e2e2e2;">get-graphics-offsets</span>
<svg style="left:1564.36px;top:354.2px" width="4" height="4" viewBox="0 0 4 4"><path d="M3.600,0.400 V3.600 H0.400 Z" fill="#e8e8e8"/></svg>
<div style="left:1571.16px;top:355.11px;width:1.9px;height:1.9px;background:#e0383e;border-radius:1px;"></div>
<div style="left:1574.36px;top:353.2px;width:5.6px;height:5.6px;background:#2a2a2c;box-sizing:border-box;border:0.600px solid #9c9c9c;"></div>
<div style="left:1575.16px;top:354px;width:2.6px;height:2.4px;background:#c586c0;border-radius:0px;"></div>
<div style="left:1576.96px;top:356px;width:2.2px;height:2px;background:#c8c8c8;border-radius:0px;"></div>
<span class="t" style="left:1583.36px;top:353.62px;font:400 5.1px/1 'Liberation Sans',sans-serif;color:#e2e2e2;">graphics-hook</span>
<svg style="left:1572.28px;top:361.24px" width="4" height="5" viewBox="0 0 4 5"><path d="M0.700,0.500 L3.200,2.500 L0.700,4.500 Z" fill="none" stroke="#d8d8d8" stroke-width="0.700"/></svg>
<div style="left:1581.78px;top:362.64px;width:1.4px;height:1.4px;background:#d0d0d0;border-radius:0px;"></div>
<div style="left:1583.98px;top:362.04px;width:2.4px;height:3px;background:#d0d0d0;border-radius:0px;"></div>
<span class="t" style="left:1590.98px;top:361.26px;font:400 5.1px/1 'Liberation Sans',sans-serif;color:#e2e2e2;">References</span>
<svg style="left:1572.98px;top:368.88px" width="4" height="5" viewBox="0 0 4 5"><path d="M0.700,0.500 L3.200,2.500 L0.700,4.500 Z" fill="none" stroke="#d8d8d8" stroke-width="0.700"/></svg>
<div style="left:1582.38px;top:368.67px;width:5px;height:5px;background:#dcb67a;border-radius:0.5px;"></div>
<div style="left:1584.58px;top:369.67px;width:2.6px;height:3.6px;background:#3f8fd8;border-radius:0.3px;"></div>
<span class="t" style="left:1590.98px;top:368.89px;font:400 5.1px/1 'Liberation Sans',sans-serif;color:#e2e2e2;">External Dependencies</span>
<svg style="left:1572.98px;top:376.51px" width="4" height="5" viewBox="0 0 4 5"><path d="M0.700,0.500 L3.200,2.500 L0.700,4.500 Z" fill="none" stroke="#d8d8d8" stroke-width="0.700"/></svg>
<svg style="left:1582.18px;top:376.11px" width="7" height="6" viewBox="0 0 7 6"><path d="M0.400,5.600 V0.600 H2.800 L3.600,1.500 H6.600 V5.600 Z" fill="#dcb67a"/></svg>
<span class="t" style="left:1590.98px;top:376.53px;font:400 5.1px/1 'Liberation Sans',sans-serif;color:#e2e2e2;">Header Files</span>
<svg style="left:1572.68px;top:384.74px" width="4" height="4" viewBox="0 0 4 4"><path d="M3.600,0.400 V3.600 H0.400 Z" fill="#e8e8e8"/></svg>
<svg style="left:1581.98px;top:383.74px" width="8" height="6" viewBox="0 0 8 6"><path d="M0.600,5.400 V0.800 H2.800 L3.600,1.600 H6.400 V2.600 H1.800 L0.600,5.400 H6.200 L7.400,2.600 H1.800" fill="none" stroke="#dcb67a" stroke-width="0.800"/></svg>
<span class="t" style="left:1590.98px;top:384.16px;font:400 5.1px/1 'Liberation Sans',sans-serif;color:#e2e2e2;">Source Files</span>
<svg style="left:1579.9px;top:391.78px" width="4" height="5" viewBox="0 0 4 5"><path d="M0.700,0.500 L3.200,2.500 L0.700,4.500 Z" fill="none" stroke="#d8d8d8" stroke-width="0.700"/></svg>
<div style="left:1586.2px;top:392.98px;width:2px;height:2.6px;background:#3f9fe8;border-radius:0.8px;"></div>
<span class="t" style="left:1589.2px;top:391.43px;font:700 4px/1 'Liberation Sans',sans-serif;color:#c586c0;">+</span>
<span class="t" style="left:1591.6px;top:392.83px;font:700 4px/1 'Liberation Sans',sans-serif;color:#c586c0;">+</span>
<span class="t" style="left:1598.6px;top:391.8px;font:400 5.1px/1 'Liberation Sans',sans-serif;color:#e2e2e2;">d3d8-capture.cpp</span>
<svg style="left:1579.9px;top:399.42px" width="4" height="5" viewBox="0 0 4 5"><path d="M0.700,0.500 L3.200,2.500 L0.700,4.500 Z" fill="none" stroke="#d8d8d8" stroke-width="0.700"/></svg>
<div style="left:1586.2px;top:400.62px;width:2px;height:2.6px;background:#3f9fe8;border-radius:0.8px;"></div>
<span class="t" style="left:1589.2px;top:399.07px;font:700 4px/1 'Liberation Sans',sans-serif;color:#c586c0;">+</span>
<span class="t" style="left:1591.6px;top:400.47px;font:700 4px/1 'Liberation Sans',sans-serif;color:#c586c0;">+</span>
<span class="t" style="left:1598.6px;top:399.43px;font:400 5.1px/1 'Liberation Sans',sans-serif;color:#e2e2e2;">d3d9-capture.cpp</span>
<svg style="left:1579.9px;top:407.05px" width="4" height="5" viewBox="0 0 4 5"><path d="M0.700,0.500 L3.200,2.500 L0.700,4.500 Z" fill="none" stroke="#d8d8d8" stroke-width="0.700"/></svg>
<div style="left:1586.2px;top:408.25px;width:2px;height:2.6px;background:#3f9fe8;border-radius:0.8px;"></div>
<span class="t" style="left:1589.2px;top:406.7px;font:700 4px/1 'Liberation Sans',sans-serif;color:#c586c0;">+</span>
<span class="t" style="left:1591.6px;top:408.1px;font:700 4px/1 'Liberation Sans',sans-serif;color:#c586c0;">+</span>
<span class="t" style="left:1598.6px;top:407.07px;font:400 5.1px/1 'Liberation Sans',sans-serif;color:#e2e2e2;">d3d10-capture.cpp</span>
<svg style="left:1579.9px;top:414.69px" width="4" height="5" viewBox="0 0 4 5"><path d="M0.700,0.500 L3.200,2.500 L0.700,4.500 Z" fill="none" stroke="#d8d8d8" stroke-width="0.700"/></svg>
<div style="left:1586.2px;top:415.89px;width:2px;height:2.6px;background:#3f9fe8;border-radius:0.8px;"></div>
<span class="t" style="left:1589.2px;top:414.34px;font:700 4px/1 'Liberation Sans',sans-serif;color:#c586c0;">+</span>
<span class="t" style="left:1591.6px;top:415.74px;font:700 4px/1 'Liberation Sans',sans-serif;color:#c586c0;">+</span>
<span class="t" style="left:1598.6px;top:414.7px;font:400 5.1px/1 'Liberation Sans',sans-serif;color:#e2e2e2;">d3d11-capture.cpp</span>
<svg style="left:1579.9px;top:422.32px" width="4" height="5" viewBox="0 0 4 5"><path d="M0.700,0.500 L3.200,2.500 L0.700,4.500 Z" fill="none" stroke="#d8d8d8" stroke-width="0.700"/></svg>
<div style="left:1586.2px;top:423.52px;width:2px;height:2.6px;background:#3f9fe8;border-radius:0.8px;"></div>
<span class="t" style="left:1589.2px;top:421.97px;font:700 4px/1 'Liberation Sans',sans-serif;color:#c586c0;">+</span>
<span class="t" style="left:1591.6px;top:423.37px;font:700 4px/1 'Liberation Sans',sans-serif;color:#c586c0;">+</span>
<span class="t" style="left:1598.6px;top:422.34px;font:400 5.1px/1 'Liberation Sans',sans-serif;color:#e2e2e2;">d3d12-capture.cpp</span>
<svg style="left:1579.9px;top:429.96px" width="4" height="5" viewBox="0 0 4 5"><path d="M0.700,0.500 L3.200,2.500 L0.700,4.500 Z" fill="none" stroke="#d8d8d8" stroke-width="0.700"/></svg>
<div style="left:1586.2px;top:431.16px;width:2px;height:2.6px;background:#3f9fe8;border-radius:0.8px;"></div>
<span class="t" style="left:1589.2px;top:429.61px;font:700 4px/1 'Liberation Sans',sans-serif;color:#c586c0;">+</span>
<span class="t" style="left:1591.6px;top:431.01px;font:700 4px/1 'Liberation Sans',sans-serif;color:#c586c0;">+</span>
<span class="t" style="left:1598.6px;top:429.97px;font:400 5.1px/1 'Liberation Sans',sans-serif;color:#e2e2e2;">dxgi-capture.cpp</span>
<svg style="left:1579.9px;top:437.59px" width="4" height="5" viewBox="0 0 4 5"><path d="M0.700,0.500 L3.200,2.500 L0.700,4.500 Z" fill="none" stroke="#d8d8d8" stroke-width="0.700"/></svg>
<div style="left:1586.2px;top:438.79px;width:2px;height:2.6px;background:#3f9fe8;border-radius:0.8px;"></div>
<div style="left:1590.4px;top:437.19px;width:4px;height:5.6px;background:transparent;box-sizing:border-box;border:0.600px solid #a0a0a0;"></div>
<span class="t" style="left:1598.6px;top:437.61px;font:400 5.1px/1 'Liberation Sans',sans-serif;color:#e2e2e2;">gl-capture.c</span>
<svg style="left:1579.9px;top:445.23px" width="4" height="5" viewBox="0 0 4 5"><path d="M0.700,0.500 L3.200,2.500 L0.700,4.500 Z" fill="none" stroke="#d8d8d8" stroke-width="0.700"/></svg>
<div style="left:1586.2px;top:446.43px;width:2px;height:2.6px;background:#3f9fe8;border-radius:0.8px;"></div>
<div style="left:1590.4px;top:444.82px;width:4px;height:5.6px;background:transparent;box-sizing:border-box;border:0.600px solid #a0a0a0;"></div>
<span class="t" style="left:1598.6px;top:445.24px;font:400 5.1px/1 'Liberation Sans',sans-serif;color:#e2e2e2;">graphics-hook.c</span>
<div style="left:1586.2px;top:454.06px;width:2px;height:2.6px;background:#3f9fe8;border-radius:0.8px;"></div>
<div style="left:1590.4px;top:452.46px;width:4px;height:5.6px;background:transparent;box-sizing:border-box;border:0.600px solid #a0a0a0;"></div>
<span class="t" style="left:1598.6px;top:452.88px;font:400 5.1px/1 'Liberation Sans',sans-serif;color:#e2e2e2;">graphics-hook.rc</span>
<svg style="left:1579.9px;top:460.5px" width="4" height="5" viewBox="0 0 4 5"><path d="M0.700,0.500 L3.200,2.500 L0.700,4.500 Z" fill="none" stroke="#d8d8d8" stroke-width="0.700"/></svg>
<div style="left:1586.2px;top:461.69px;width:2px;height:2.6px;background:#3f9fe8;border-radius:0.8px;"></div>
<div style="left:1590.4px;top:460.09px;width:4px;height:5.6px;background:transparent;box-sizing:border-box;border:0.600px solid #a0a0a0;"></div>
<span class="t" style="left:1598.6px;top:460.51px;font:400 5.1px/1 'Liberation Sans',sans-serif;color:#e2e2e2;">obfuscate.c</span>
<svg style="left:1579.9px;top:468.13px" width="4" height="5" viewBox="0 0 4 5"><path d="M0.700,0.500 L3.200,2.500 L0.700,4.500 Z" fill="none" stroke="#d8d8d8" stroke-width="0.700"/></svg>
<div style="left:1586.2px;top:469.33px;width:2px;height:2.6px;background:#3f9fe8;border-radius:0.8px;"></div>
<div style="left:1590.4px;top:467.73px;width:4px;height:5.6px;background:transparent;box-sizing:border-box;border:0.600px solid #a0a0a0;"></div>
<span class="t" style="left:1598.6px;top:468.15px;font:400 5.1px/1 'Liberation Sans',sans-serif;color:#e2e2e2;">vulkan-capture.c</span>
<div style="left:1578.58px;top:476.96px;width:2px;height:2.6px;background:#3f9fe8;border-radius:0.8px;"></div>
<div style="left:1582.78px;top:475.36px;width:4px;height:5.6px;background:transparent;box-sizing:border-box;border:0.600px solid #a0a0a0;"></div>
<span class="t" style="left:1590.98px;top:475.78px;font:400 5.1px/1 'Liberation Sans',sans-serif;color:#e2e2e2;">CMakeLists.txt</span>
<svg style="left:1564.66px;top:483.4px" width="4" height="5" viewBox="0 0 4 5"><path d="M0.700,0.500 L3.200,2.500 L0.700,4.500 Z" fill="none" stroke="#d8d8d8" stroke-width="0.700"/></svg>
<div style="left:1571.16px;top:484.9px;width:1.9px;height:1.9px;background:#e0383e;border-radius:1px;"></div>
<div style="left:1574.36px;top:483px;width:5.6px;height:5.6px;background:#2a2a2c;box-sizing:border-box;border:0.600px solid #9c9c9c;"></div>
<div style="left:1575.16px;top:483.8px;width:2.6px;height:2.4px;background:#c586c0;border-radius:0px;"></div>
<div style="left:1576.96px;top:485.8px;width:2.2px;height:2px;background:#c8c8c8;border-radius:0px;"></div>
<span class="t" style="left:1583.36px;top:483.42px;font:400 5.1px/1 'Liberation Sans',sans-serif;color:#e2e2e2;">inject-helper</span>
<svg style="left:1564.36px;top:491.63px" width="4" height="4" viewBox="0 0 4 4"><path d="M3.600,0.400 V3.600 H0.400 Z" fill="#e8e8e8"/></svg>
<div style="left:1571.16px;top:492.53px;width:1.9px;height:1.9px;background:#e0383e;border-radius:1px;"></div>
<div style="left:1574.36px;top:490.63px;width:5.6px;height:5.6px;background:#2a2a2c;box-sizing:border-box;border:0.600px solid #9c9c9c;"></div>
<div style="left:1575.16px;top:491.43px;width:2.6px;height:2.4px;background:#c586c0;border-radius:0px;"></div>
<div style="left:1576.96px;top:493.43px;width:2.2px;height:2px;background:#c8c8c8;border-radius:0px;"></div>
<span class="t" style="left:1583.36px;top:491.05px;font:400 5.1px/1 'Liberation Sans',sans-serif;color:#e2e2e2;">win-capture</span>
<svg style="left:1572.28px;top:498.67px" width="4" height="5" viewBox="0 0 4 5"><path d="M0.700,0.500 L3.200,2.500 L0.700,4.500 Z" fill="none" stroke="#d8d8d8" stroke-width="0.700"/></svg>
<div style="left:1581.78px;top:500.07px;width:1.4px;height:1.4px;background:#d0d0d0;border-radius:0px;"></div>
<div style="left:1583.98px;top:499.47px;width:2.4px;height:3px;background:#d0d0d0;border-radius:0px;"></div>
<span class="t" style="left:1590.98px;top:498.69px;font:400 5.1px/1 'Liberation Sans',sans-serif;color:#e2e2e2;">References</span>
<svg style="left:1572.98px;top:506.31px" width="4" height="5" viewBox="0 0 4 5"><path d="M0.700,0.500 L3.200,2.500 L0.700,4.500 Z" fill="none" stroke="#d8d8d8" stroke-width="0.700"/></svg>
<div style="left:1582.38px;top:506.11px;width:5px;height:5px;background:#dcb67a;border-radius:0.5px;"></div>
<div style="left:1584.58px;top:507.11px;width:2.6px;height:3.6px;background:#3f8fd8;border-radius:0.3px;"></div>
<span class="t" style="left:1590.98px;top:506.32px;font:400 5.1px/1 'Liberation Sans',sans-serif;color:#e2e2e2;">External Dependencies</span>
<svg style="left:1572.98px;top:513.94px" width="4" height="5" viewBox="0 0 4 5"><path d="M0.700,0.500 L3.200,2.500 L0.700,4.500 Z" fill="none" stroke="#d8d8d8" stroke-width="0.700"/></svg>
<svg style="left:1582.18px;top:513.54px" width="7" height="6" viewBox="0 0 7 6"><path d="M0.400,5.600 V0.600 H2.800 L3.600,1.500 H6.600 V5.600 Z" fill="#dcb67a"/></svg>
<span class="t" style="left:1590.98px;top:513.96px;font:400 5.1px/1 'Liberation Sans',sans-serif;color:#e2e2e2;">Header Files</span>
<svg style="left:1572.68px;top:522.18px" width="4" height="4" viewBox="0 0 4 4"><path d="M3.600,0.400 V3.600 H0.400 Z" fill="#e8e8e8"/></svg>
<svg style="left:1581.98px;top:521.18px" width="8" height="6" viewBox="0 0 8 6"><path d="M0.600,5.400 V0.800 H2.800 L3.600,1.600 H6.400 V2.600 H1.800 L0.600,5.400 H6.200 L7.400,2.600 H1.800" fill="none" stroke="#dcb67a" stroke-width="0.800"/></svg>
<span class="t" style="left:1590.98px;top:521.59px;font:400 5.1px/1 'Liberation Sans',sans-serif;color:#e2e2e2;">Source Files</span>
<svg style="left:1579.9px;top:529.21px" width="4" height="5" viewBox="0 0 4 5"><path d="M0.700,0.500 L3.200,2.500 L0.700,4.500 Z" fill="none" stroke="#d8d8d8" stroke-width="0.700"/></svg>
<div style="left:1586.2px;top:530.41px;width:2px;height:2.6px;background:#3f9fe8;border-radius:0.8px;"></div>
<div style="left:1590.4px;top:528.81px;width:4px;height:5.6px;background:transparent;box-sizing:border-box;border:0.600px solid #a0a0a0;"></div>
<span class="t" style="left:1598.6px;top:529.23px;font:400 5.1px/1 'Liberation Sans',sans-serif;color:#e2e2e2;">app-helpers.c</span>
<svg style="left:1579.9px;top:536.85px" width="4" height="5" viewBox="0 0 4 5"><path d="M0.700,0.500 L3.200,2.500 L0.700,4.500 Z" fill="none" stroke="#d8d8d8" stroke-width="0.700"/></svg>
<div style="left:1586.2px;top:538.04px;width:2px;height:2.6px;background:#3f9fe8;border-radius:0.8px;"></div>
<div style="left:1590.4px;top:536.45px;width:4px;height:5.6px;background:transparent;box-sizing:border-box;border:0.600px solid #a0a0a0;"></div>
<span class="t" style="left:1598.6px;top:536.86px;font:400 5.1px/1 'Liberation Sans',sans-serif;color:#e2e2e2;">cursor-capture.c</span>
<svg style="left:1579.9px;top:544.48px" width="4" height="5" viewBox="0 0 4 5"><path d="M0.700,0.500 L3.200,2.500 L0.700,4.500 Z" fill="none" stroke="#d8d8d8" stroke-width="0.700"/></svg>
<div style="left:1586.2px;top:545.68px;width:2px;height:2.6px;background:#3f9fe8;border-radius:0.8px;"></div>
<div style="left:1590.4px;top:544.08px;width:4px;height:5.6px;background:transparent;box-sizing:border-box;border:0.600px solid #a0a0a0;"></div>
<span class="t" style="left:1598.6px;top:544.5px;font:400 5.1px/1 'Liberation Sans',sans-serif;color:#e2e2e2;">dc-capture.c</span>
<div style="left:1683.3px;top:177px;width:5.1px;height:525px;background:#3e3e42;"></div>
<svg style="left:1683.600px;top:178.500px" width="5" height="4" viewBox="0 0 5 4"><path d="M0.500,3.200 L2.500,0.800 L4.500,3.200 Z" fill="#8a8a8a"/></svg>
<div style="left:1684px;top:184.5px;width:3.8px;height:309.5px;background:#66666a;"></div>
<span class="t" style="left:1698.4px;top:145.6px;font:400 5.3px/1 'Liberation Sans',sans-serif;color:#b4b4b4;letter-spacing:-0.234px;transform-origin:0 0;transform:rotate(90deg);">Server Explorer</span>
<div style="left:1700.4px;top:144.6px;width:0.6px;height:35.4px;background:#3a3a3e;"></div>
<span class="t" style="left:1698.4px;top:183.4px;font:400 5.3px/1 'Liberation Sans',sans-serif;color:#b4b4b4;letter-spacing:-0.195px;transform-origin:0 0;transform:rotate(90deg);">Toolbox</span>
<div style="left:1700.4px;top:182.4px;width:0.6px;height:19px;background:#3a3a3e;"></div>
<span class="t" style="left:1698.4px;top:206px;font:400 5.3px/1 'Liberation Sans',sans-serif;color:#b4b4b4;letter-spacing:0.011px;transform-origin:0 0;transform:rotate(90deg);">Notifications</span>
<div style="left:1700.4px;top:205px;width:0.6px;height:31px;background:#3a3a3e;"></div>
<svg style="left:1416.7px;top:537.3px" width="272.3" height="171.7" viewBox="0 0 272.3 171.7">
<defs>
<linearGradient id="wbg" x1="0" y1="0" x2="1" y2="0"><stop offset="0" stop-color="#c048c8"/><stop offset=".3" stop-color="#b868d0"/><stop offset=".5" stop-color="#c8b8ec"/><stop offset=".68" stop-color="#a8a0ec"/><stop offset=".82" stop-color="#7058e0"/><stop offset="1" stop-color="#6a48e0"/></linearGradient>
<linearGradient id="wdk" x1="0" y1="0" x2="0" y2="1"><stop offset="0" stop-color="#160838" stop-opacity="0"/><stop offset=".45" stop-color="#160838" stop-opacity=".08"/><stop offset=".72" stop-color="#140840" stop-opacity=".5"/><stop offset="1" stop-color="#120838" stop-opacity=".68"/></linearGradient>
<radialGradient id="obsg" cx=".45" cy=".3" r=".8"><stop offset="0" stop-color="#343436"/><stop offset=".5" stop-color="#1e1e20"/><stop offset="1" stop-color="#0c0c0d"/></radialGradient>
<linearGradient id="chg" x1="0" y1="0" x2="1" y2="0"><stop offset="0" stop-color="#262628"/><stop offset=".55" stop-color="#555558"/><stop offset="1" stop-color="#2c2c2e"/></linearGradient>
<filter id="bl4" x="-20%" y="-20%" width="140%" height="140%"><feGaussianBlur stdDeviation="3.200"/></filter>
<filter id="bl8" x="-30%" y="-30%" width="160%" height="160%"><feGaussianBlur stdDeviation="7"/></filter>
<clipPath id="wclip"><rect width="272.3" height="171.7"/></clipPath>
</defs>
<g clip-path="url(#wclip)">
<rect width="272.3" height="171.7" fill="url(#wbg)"/>
<g filter="url(#bl8)">
<rect x="110" y="-6" width="95" height="22" fill="#a4c6e8"/>
<rect x="118" y="14" width="80" height="40" fill="#ece6fa"/>
<rect x="-10" y="-8" width="70" height="22" fill="#d850b0"/>
<rect x="-10" y="38" width="44" height="24" fill="#e050e8"/>
<rect x="200" y="-5" width="80" height="30" fill="#8468f4"/>
<rect x="255" y="-8" width="24" height="16" fill="#f0b0fa"/>
<rect x="205" y="44" width="70" height="40" fill="#4c30b8"/>
<rect x="225" y="100" width="40" height="50" fill="#0a0830"/>
<rect x="262" y="95" width="14" height="70" fill="#3434e0"/>
<rect x="78" y="125" width="26" height="50" fill="#2020a0"/>
<rect x="-4" y="125" width="30" height="50" fill="#1a0838"/>
<rect x="46" y="128" width="40" height="46" fill="#160a48"/>
</g>
<rect width="272.3" height="171.7" fill="url(#wdk)"/>
<g filter="url(#bl4)">
<path d="M-4,9 L88,45 L88,54 L-4,26 Z" fill="#3a0f42" opacity=".85"/>
<path d="M48,20 L98,36 L96,43 L46,27 Z" fill="#fbd8f4"/>
<path d="M150,38 L268,12 L268,22 L176,50 Z" fill="#c858f4" opacity=".8"/>
<rect x="3" y="52" width="15" height="34" fill="#43205f" opacity=".85"/>
<rect x="45" y="60" width="14" height="32" fill="#3c1a5c" opacity=".9"/>
<rect x="72" y="44" width="14" height="22" fill="#40103c" opacity=".8"/>
<rect x="34" y="86" width="20" height="14" fill="#78b8cc"/>
<rect x="61" y="80" width="10" height="12" fill="#ffd8f4"/>
<rect x="66" y="66" width="6" height="30" fill="#e060c0" opacity=".8"/>
<rect x="39" y="116" width="8" height="16" fill="#e410e0"/>
<rect x="28" y="134" width="13" height="40" fill="#9484fa"/>
<rect x="2" y="147" width="10" height="9" fill="#c05070"/>
<rect x="6" y="118" width="20" height="5" fill="#9a70b0" opacity=".8"/>
<rect x="62" y="112" width="10" height="9" fill="#b06078" opacity=".8"/>
<rect x="146" y="5" width="10" height="5" fill="#6e88b4" opacity=".7"/>
<rect x="184" y="5" width="12" height="5" fill="#6e88b4" opacity=".7"/>
<rect x="246" y="85" width="20" height="14" fill="#a8c8f4"/>
<rect x="218" y="84" width="12" height="8" fill="#b0b0f0" opacity=".8"/>
<rect x="204" y="132" width="10" height="8" fill="#8080e0" opacity=".6"/>
<rect x="232" y="62" width="14" height="22" fill="#3a2098" opacity=".8"/>
<rect x="252" y="66" width="6" height="26" fill="#c060f0" opacity=".7"/>
</g>
<!-- chair -->
<path d="M186,62 C204,64 214,80 219,104 L231,171.700 L80,171.700 C96,150 170,150 186,62 Z" fill="url(#chg)"/>
<path d="M209,90 C216,110 222,140 227,171.700" fill="none" stroke="#c488f2" stroke-width="1.500"/>
<path d="M205,150 C211,146 218,146 221,150 L224,171.700 L199,171.700 C201,163 203,156 205,150 Z" fill="#c272f0"/>
<path d="M171,135 C176,124 188,124 196,136 C202,146 200,154 192,154.500 C184,155 174,150 168,142 Z" fill="#b264e4"/>
<path d="M173,138 C178,129 187,129 193,138 C198,146 196,151 190,151 C184,151 176,147 172,142 Z" fill="#0a52a8"/>
<path d="M78,171.700 C82,152 96,144 110,140 L118,150 C104,154 96,160 92,171.700 Z" fill="#b478ea"/>
<!-- body -->
<path d="M82,171.700 C90,152 110,147.500 140,147.500 C170,147.500 190,152 197,171.700 Z" fill="#6b7b88"/>
<!-- obs head -->
<circle cx="138.300" cy="91.800" r="60.200" fill="#fff"/>
<circle cx="138.300" cy="91.800" r="54.600" fill="url(#obsg)"/>
<g fill="#d6d6d8">
<path d="M126.600,40.500 C111,50 103,72 117,88 C123,95 132,98 141,97.500 L144,89 C136,87 128,82 123,74 C116,63 118,50 126.600,40.500 Z"/>
<path d="M187.700,98.300 C184,86 172,76 158,75.500 C148,75 141,82 137.500,90 L144,98 C147,91.500 153,87.500 161,86.500 C171,85.500 181,90 187.700,98.300 Z"/>
<path d="M134.500,91 C136,100 137.500,109 138.500,119 L142.500,119 C142.500,109 143.500,100 146.500,92 Z"/>
</g>
<!-- hand -->
<path d="M112,100 C113,93 121,93.500 123.500,101 L126.500,118 L151,112 C160,110 163.500,118.500 155,122 L130,130 C135,131.500 135,137.500 130,139 C134,141.500 133,147 128,148 C130.500,151.500 128,156 123,156 C112,159 101,156 97.500,147 C93,136 98,124 109,119.500 Z" fill="#f4900c"/>
</g></svg>
<span class="t" style="left:632px;top:649.44px;font:700 22.4px/1 'Liberation Sans',sans-serif;color:#ffffff;letter-spacing:-0.42px;">Now playing:</span>
<span class="t" style="left:631.3px;top:677.64px;font:700 22.4px/1 'Liberation Sans',sans-serif;color:#ffffff;letter-spacing:-0.105px;">Totally Royalty-Free Music!</span>
<svg style="left:615.5px;top:751px" width="17" height="14" viewBox="0 0 17 14"><rect x="0.8" y="0.8" width="15.4" height="9.9" rx="0.8" fill="none" stroke="#e1e0e1" stroke-width="1.5"/><path d="M5.2,13.3 h6.6 l-1.2,-2 h-4.2 z" fill="#e1e0e1"/></svg>
<span class="t" style="left:644.5px;top:751.84px;font:400 12px/1 'Liberation Sans',sans-serif;color:#e1e0e1;letter-spacing:0.216px;">Display Capture</span>
<svg style="left:829.8px;top:747px" width="20" height="20" viewBox="-10 -10 20 20"><path d="M-1.42,-5.90 L-0.90,-8.15 L0.90,-8.15 L1.42,-5.90 L3.17,-5.17 L5.13,-6.40 L6.40,-5.13 L5.17,-3.17 L5.90,-1.42 L8.15,-0.90 L8.15,0.90 L5.90,1.42 L5.17,3.17 L6.40,5.13 L5.13,6.40 L3.17,5.17 L1.42,5.90 L0.90,8.15 L-0.90,8.15 L-1.42,5.90 L-3.17,5.17 L-5.13,6.40 L-6.40,5.13 L-5.17,3.17 L-5.90,1.42 L-8.15,0.90 L-8.15,-0.90 L-5.90,-1.42 L-5.17,-3.17 L-6.40,-5.13 L-5.13,-6.40 L-3.17,-5.17 Z M3.12,0 A3.12,3.12 0 1 0 -3.12,0 A3.12,3.12 0 1 0 3.12,0 Z" fill="#d8d8d8" fill-rule="evenodd"/></svg>
<span class="t" style="left:850px;top:751.84px;font:400 12px/1 'Liberation Sans',sans-serif;color:#e1e0e1;letter-spacing:0.347px;">Properties</span>
<svg style="left:941px;top:748px" width="18" height="18" viewBox="0 0 18 18"><defs><clipPath id="fa"><circle cx="6.300" cy="6.600" r="5.500"/></clipPath><clipPath id="fb"><circle cx="10.500" cy="10.900" r="5.600"/></clipPath></defs>
<circle cx="10.500" cy="10.900" r="5.300" fill="none" stroke="#b8b8b8" stroke-width="1.300" stroke-dasharray="1.600 1.500"/>
<circle cx="6.300" cy="6.600" r="5.500" fill="#d2d2d2"/>
<g clip-path="url(#fa)"><circle cx="10.500" cy="10.900" r="5.900" fill="#181819"/><g clip-path="url(#fb)" stroke="#d8d8d8" stroke-width="1.150"><path d="M3,5.500 L11,13.500"/><path d="M5.200,4.300 L13.200,12.300"/><path d="M7.400,3.100 L15.400,11.100"/><path d="M0.800,6.700 L8.800,14.700"/></g></g></svg>
<span class="t" style="left:960px;top:751.84px;font:400 12px/1 'Liberation Sans',sans-serif;color:#e1e0e1;letter-spacing:0.204px;">Filters</span>
<span class="t" style="left:1024.5px;top:751.84px;font:400 12px/1 'Liberation Sans',sans-serif;color:#e1e0e1;letter-spacing:0.175px;">Display</span>
<div style="left:1071px;top:743px;width:600px;height:26.5px;background:#28282a;border-radius:2px;"></div>
<div style="left:1650.5px;top:744px;width:1px;height:24.5px;background:#222224;"></div>
<span class="t" style="left:1081.3px;top:750.84px;font:400 12px/1 'Liberation Sans',sans-serif;color:#e1e0e1;letter-spacing:0.096px;">Display 2: 2560x1440 @ 2560,0</span>
<svg style="left:1656px;top:748.5px" width="10" height="16" viewBox="-5 -8 10 16"><path d="M-3,-3 L0,-6 L3,-3 M-3,3 L0,6 L3,3" fill="none" stroke="#b0b0b0" stroke-width="1"/></svg>
<span class="t" style="left:216.5px;top:779.85px;font:700 14px/1 'Liberation Sans',sans-serif;color:#eeeeee;letter-spacing:-0.554px;">Scenes</span>
<div style="left:212px;top:795.3px;width:84px;height:5px;background:#2f2f2f;border-radius:1px 0 0 1px;"></div>
<div style="left:294px;top:797.8px;width:174px;height:2.5px;background:#2f2f2f;"></div>
<svg style="left:453px;top:784.2px" width="7" height="7" viewBox="0 0 7 7"><rect x="0.5" y="0.5" width="4" height="3.4" fill="#181819" stroke="#8a8a8a" stroke-width="1"/><rect x="2.5" y="2.6" width="4" height="3.6" fill="#a5a5a5" stroke="#a5a5a5" stroke-width="0.6"/></svg>
<span class="t" style="left:502.4px;top:779.85px;font:700 14px/1 'Liberation Sans',sans-serif;color:#eeeeee;letter-spacing:-0.331px;">Sources</span>
<div style="left:498.2px;top:795.3px;width:84px;height:5px;background:#2f2f2f;border-radius:1px 0 0 1px;"></div>
<div style="left:580.2px;top:797.8px;width:169.8px;height:2.5px;background:#2f2f2f;"></div>
<svg style="left:719px;top:784.2px" width="7" height="7" viewBox="0 0 7 7"><rect x="0.5" y="0.5" width="4" height="3.4" fill="#181819" stroke="#8a8a8a" stroke-width="1"/><rect x="2.5" y="2.6" width="4" height="3.6" fill="#a5a5a5" stroke="#a5a5a5" stroke-width="0.6"/></svg>
<span class="t" style="left:768px;top:779.85px;font:700 14px/1 'Liberation Sans',sans-serif;color:#eeeeee;letter-spacing:0.369px;">Audio Mixer</span>
<div style="left:763px;top:795.3px;width:86px;height:5px;background:#2f2f2f;border-radius:1px 0 0 1px;"></div>
<div style="left:847px;top:797.8px;width:456px;height:2.5px;background:#2f2f2f;"></div>
<svg style="left:1273px;top:784.2px" width="7" height="7" viewBox="0 0 7 7"><rect x="0.5" y="0.5" width="4" height="3.4" fill="#181819" stroke="#8a8a8a" stroke-width="1"/><rect x="2.5" y="2.6" width="4" height="3.6" fill="#a5a5a5" stroke="#a5a5a5" stroke-width="0.6"/></svg>
<span class="t" style="left:1322.5px;top:779.85px;font:700 14px/1 'Liberation Sans',sans-serif;color:#eeeeee;letter-spacing:0.041px;">Scene Transitions</span>
<div style="left:1318px;top:795.3px;width:84.5px;height:5px;background:#2f2f2f;border-radius:1px 0 0 1px;"></div>
<div style="left:1400.5px;top:797.8px;width:137px;height:2.5px;background:#2f2f2f;"></div>
<svg style="left:1507px;top:784.2px" width="7" height="7" viewBox="0 0 7 7"><rect x="0.5" y="0.5" width="4" height="3.4" fill="#181819" stroke="#8a8a8a" stroke-width="1"/><rect x="2.5" y="2.6" width="4" height="3.6" fill="#a5a5a5" stroke="#a5a5a5" stroke-width="0.6"/></svg>
<span class="t" style="left:1556.3px;top:779.85px;font:700 14px/1 'Liberation Sans',sans-serif;color:#eeeeee;letter-spacing:0.152px;">Controls</span>
<div style="left:1552px;top:795.3px;width:84px;height:5px;background:#2f2f2f;border-radius:1px 0 0 1px;"></div>
<div style="left:1634px;top:797.8px;width:74px;height:2.5px;background:#2f2f2f;"></div>
<svg style="left:1677px;top:784.2px" width="7" height="7" viewBox="0 0 7 7"><rect x="0.5" y="0.5" width="4" height="3.4" fill="#181819" stroke="#8a8a8a" stroke-width="1"/><rect x="2.5" y="2.6" width="4" height="3.6" fill="#a5a5a5" stroke="#a5a5a5" stroke-width="0.6"/></svg>
<div style="left:207px;top:831px;width:262px;height:29px;background:#131a30;box-sizing:border-box;border:1px solid #232a48;"></div>
<span class="t" style="left:213.4px;top:808.84px;font:400 12px/1 'Liberation Sans',sans-serif;color:#e1e0e1;letter-spacing:-0.835px;">BRB</span>
<span class="t" style="left:213.4px;top:839.84px;font:400 12px/1 'Liberation Sans',sans-serif;color:#e1e0e1;letter-spacing:0.453px;">Main</span>
<span class="t" style="left:213.4px;top:870.84px;font:400 12px/1 'Liberation Sans',sans-serif;color:#e1e0e1;letter-spacing:0.15px;">Starting Soon</span>
<span class="t" style="left:213.4px;top:901.84px;font:400 12px/1 'Liberation Sans',sans-serif;color:#e1e0e1;letter-spacing:0.138px;">Goodbye</span>
<span class="t" style="left:213.4px;top:932.84px;font:400 12px/1 'Liberation Sans',sans-serif;color:#e1e0e1;letter-spacing:0.265px;">Webcam</span>
<span class="t" style="left:213.4px;top:963.84px;font:400 12px/1 'Liberation Sans',sans-serif;color:#e1e0e1;letter-spacing:0.076px;">Webcam Full</span>
<div style="left:475.8px;top:841px;width:6.2px;height:99px;background:#2f2f2f;"></div>
<div style="left:207px;top:981px;width:134px;height:2.2px;background:#2f2f2f;"></div>
<div style="left:339px;top:981px;width:150.5px;height:4.8px;background:#2f2f2f;border-radius:0 1px 1px 0;"></div>
<svg style="left:215.8px;top:991.3px" width="16" height="16" viewBox="-8 -8 16 16"><path d="M-7.6,0 H7.6 M0,-7.6 V7.6" stroke="#dcdcdc" stroke-width="1.4"/></svg>
<svg style="left:242px;top:991.3px" width="16" height="16" viewBox="-8 -8 16 16"><path d="M-7.800,0 H7.800" stroke="#dcdcdc" stroke-width="1.400"/></svg>
<svg style="left:273px;top:991.3px" width="18" height="16" viewBox="-9 -8 18 16"><path d="M-7.600,4.200 L0,-3.600 L7.600,4.200" stroke="#dcdcdc" stroke-width="1.500" fill="none"/></svg>
<svg style="left:299px;top:991.3px" width="18" height="16" viewBox="-9 -8 18 16"><path d="M-7.600,-4.200 L0,3.600 L7.600,-4.200" stroke="#dcdcdc" stroke-width="1.500" fill="none"/></svg>
<div style="left:493px;top:862px;width:262px;height:29px;background:#131a30;box-sizing:border-box;border:1px solid #232a48;"></div>
<span class="t" style="left:523.2px;top:808.84px;font:400 12px/1 'Liberation Sans',sans-serif;color:#e1e0e1;letter-spacing:0.085px;">Now Playing</span>
<span class="t" style="left:499px;top:801.55px;font:700 23.8px/1 'Liberation Sans',sans-serif;color:#dddddd;font-family:'Liberation Serif',serif;">T</span>
<svg style="left:713px;top:809.1px" width="16" height="11" viewBox="0 0 16 11"><path d="M0.300,5.500 C3,0.600 13,0.600 15.700,5.500 C13,10.400 3,10.400 0.300,5.500 Z" fill="#e4e4e4"/><circle cx="8" cy="5.500" r="3.500" fill="#181819"/><circle cx="8" cy="5.500" r="2" fill="#e4e4e4"/></svg>
<svg style="left:737.300px;top:807.1999999999999px" width="14" height="15" viewBox="0 0 14 15"><path d="M3.300,6.500 V4.600 a3.300,3.600 0 0 1 6.600,0 V6.500" fill="none" stroke="#e4e4e4" stroke-width="1.700"/><rect x="0.400" y="6.300" width="12.400" height="7.400" rx="0.800" fill="#e4e4e4"/></svg>
<span class="t" style="left:523.2px;top:839.84px;font:400 12px/1 'Liberation Sans',sans-serif;color:#e1e0e1;letter-spacing:0.229px;">Webcam</span>
<svg style="left:499px;top:837.4px" width="17" height="16" viewBox="0 0 17 16"><g fill="#dddddd"><rect x="0.3" y="1.0" width="1.9" height="1.9"/><rect x="4.3" y="1.0" width="12" height="1.9"/><rect x="0.3" y="4.7" width="1.9" height="1.9"/><rect x="4.3" y="4.7" width="12" height="1.9"/><rect x="0.3" y="8.4" width="1.9" height="1.9"/><rect x="4.3" y="8.4" width="12" height="1.9"/><rect x="0.3" y="12.100000000000001" width="1.9" height="1.9"/><rect x="4.3" y="12.100000000000001" width="12" height="1.9"/></g></svg>
<svg style="left:713px;top:840.1px" width="16" height="11" viewBox="0 0 16 11"><path d="M0.300,5.500 C3,0.600 13,0.600 15.700,5.500 C13,10.400 3,10.400 0.300,5.500 Z" fill="#e4e4e4"/><circle cx="8" cy="5.500" r="3.500" fill="#181819"/><circle cx="8" cy="5.500" r="2" fill="#e4e4e4"/></svg>
<svg style="left:737.300px;top:838.1999999999999px" width="14" height="15" viewBox="0 0 14 15"><path d="M3.300,6.500 V4.600 a3.300,3.600 0 0 1 6.600,0 V6.500" fill="none" stroke="#e4e4e4" stroke-width="1.700"/><rect x="0.400" y="6.300" width="12.400" height="7.400" rx="0.800" fill="#e4e4e4"/></svg>
<span class="t" style="left:523.2px;top:870.84px;font:400 12px/1 'Liberation Sans',sans-serif;color:#e1e0e1;letter-spacing:0.167px;">Display Capture</span>
<svg style="left:499px;top:870.0px" width="17" height="14" viewBox="0 0 17 14"><rect x="0.8" y="0.8" width="15.4" height="9.9" rx="0.8" fill="none" stroke="#dddddd" stroke-width="1.5"/><path d="M5.2,13.3 h6.6 l-1.2,-2 h-4.2 z" fill="#dddddd"/></svg>
<svg style="left:713px;top:871.1px" width="16" height="11" viewBox="0 0 16 11"><path d="M0.300,5.500 C3,0.600 13,0.600 15.700,5.500 C13,10.400 3,10.400 0.300,5.500 Z" fill="#e4e4e4"/><circle cx="8" cy="5.500" r="3.500" fill="#131a30"/><circle cx="8" cy="5.500" r="2" fill="#e4e4e4"/></svg>
<svg style="left:737.300px;top:869.1999999999999px" width="14" height="15" viewBox="0 0 14 15"><path d="M3.300,6.500 V4.600 a3.300,3.600 0 0 1 6.600,0 V6.500" fill="none" stroke="#e4e4e4" stroke-width="1.700"/><rect x="0.400" y="6.300" width="12.400" height="7.400" rx="0.800" fill="#e4e4e4"/></svg>
<span class="t" style="left:523.2px;top:901.84px;font:400 12px/1 'Liberation Sans',sans-serif;color:#5b5b5b;letter-spacing:0.182px;">Game Capture</span>
<svg style="left:498.500px;top:902.0px" width="17" height="11" viewBox="0 0 18 11"><rect x="0.500" y="1" width="17" height="8.600" rx="4.300" fill="#b2b2b2"/><path d="M3.400,5.300 h4 M5.400,3.300 v4" stroke="#181819" stroke-width="1.300"/><circle cx="11.600" cy="6.300" r="1.100" fill="#181819"/><circle cx="14" cy="4.200" r="1.100" fill="#181819"/></svg>
<svg style="left:713px;top:902.1px" width="16" height="11" viewBox="0 0 16 11"><path d="M0.300,5.500 C3,0.600 13,0.600 15.700,5.500 C13,10.400 3,10.400 0.300,5.500 Z" fill="#6c6c6c"/><circle cx="8" cy="5.500" r="3.500" fill="#181819"/><circle cx="8" cy="5.500" r="2" fill="#6c6c6c"/><path d="M2.400,10.600 L13.600,0.400" stroke="#181819" stroke-width="2.600"/><path d="M3,10.400 L13.600,0.600" stroke="#6c6c6c" stroke-width="1.200"/></svg>
<svg style="left:737.300px;top:899.6999999999999px" width="14" height="15" viewBox="0 0 14 15"><path d="M3.600,6.500 V3.800 a3.100,3.100 0 0 1 6.200,-0.600" fill="none" stroke="#7a7a7a" stroke-width="1.600"/><rect x="0.400" y="6.300" width="12.400" height="7.400" rx="0.800" fill="#7a7a7a"/></svg>
<div style="left:493px;top:982px;width:165px;height:2.2px;background:#2f2f2f;"></div>
<div style="left:656px;top:982px;width:99px;height:4px;background:#2f2f2f;border-radius:0 1px 1px 0;"></div>
<svg style="left:502.2px;top:991.3px" width="16" height="16" viewBox="-8 -8 16 16"><path d="M-7.6,0 H7.6 M0,-7.6 V7.6" stroke="#dcdcdc" stroke-width="1.4"/></svg>
<svg style="left:528.2px;top:991.3px" width="16" height="16" viewBox="-8 -8 16 16"><path d="M-7.800,0 H7.800" stroke="#dcdcdc" stroke-width="1.400"/></svg>
<svg style="left:585px;top:991.3px" width="18" height="16" viewBox="-9 -8 18 16"><path d="M-7.600,4.200 L0,-3.600 L7.600,4.200" stroke="#dcdcdc" stroke-width="1.500" fill="none"/></svg>
<svg style="left:611.2px;top:991.3px" width="18" height="16" viewBox="-9 -8 18 16"><path d="M-7.600,-4.200 L0,3.600 L7.600,-4.200" stroke="#dcdcdc" stroke-width="1.500" fill="none"/></svg>
<svg style="left:552px;top:989.3px" width="20" height="20" viewBox="-10 -10 20 20"><path d="M-1.42,-5.90 L-0.90,-8.15 L0.90,-8.15 L1.42,-5.90 L3.17,-5.17 L5.13,-6.40 L6.40,-5.13 L5.17,-3.17 L5.90,-1.42 L8.15,-0.90 L8.15,0.90 L5.90,1.42 L5.17,3.17 L6.40,5.13 L5.13,6.40 L3.17,5.17 L1.42,5.90 L0.90,8.15 L-0.90,8.15 L-1.42,5.90 L-3.17,5.17 L-5.13,6.40 L-6.40,5.13 L-5.17,3.17 L-5.90,1.42 L-8.15,0.90 L-8.15,-0.90 L-5.90,-1.42 L-5.17,-3.17 L-6.40,-5.13 L-5.13,-6.40 L-3.17,-5.17 Z M3.12,0 A3.12,3.12 0 1 0 -3.12,0 A3.12,3.12 0 1 0 3.12,0 Z" fill="#dcdcdc" fill-rule="evenodd"/></svg>
<span class="t" style="left:763.6px;top:807.04px;font:400 12px/1 'Liberation Sans',sans-serif;color:#e1e0e1;letter-spacing:0.225px;">Desktop Audio</span>
<span class="t" style="left:1250.3px;top:807.04px;font:400 12px/1 'Liberation Sans',sans-serif;color:#e1e0e1;">0.0 dB</span>
<div style="left:768px;top:823px;width:344.4px;height:3px;background:#42740c;"></div>
<div style="left:1112.4px;top:823px;width:94.71px;height:3px;background:#988f0f;"></div>
<div style="left:1207.11px;top:823px;width:77.89px;height:3px;background:#802004;"></div>
<div style="left:768px;top:823px;width:344.4px;height:3px;background:#84d82b;"></div>
<div style="left:1112.4px;top:823px;width:34.44px;height:3px;background:#e4d717;"></div>
<div style="left:1052.13px;top:823px;width:3px;height:3px;background:#22251f;"></div>
<div style="left:1198.5px;top:823px;width:3px;height:3px;background:#e4d717;"></div>
<div style="left:763px;top:823px;width:3px;height:3px;background:#e4d717;"></div>
<div style="left:768px;top:827px;width:344.4px;height:3px;background:#42740c;"></div>
<div style="left:1112.4px;top:827px;width:94.71px;height:3px;background:#988f0f;"></div>
<div style="left:1207.11px;top:827px;width:77.89px;height:3px;background:#802004;"></div>
<div style="left:768px;top:827px;width:344.4px;height:3px;background:#84d82b;"></div>
<div style="left:1112.4px;top:827px;width:51.66px;height:3px;background:#e4d717;"></div>
<div style="left:1079.68px;top:827px;width:3px;height:3px;background:#22251f;"></div>
<div style="left:1194.19px;top:827px;width:3px;height:3px;background:#e4d717;"></div>
<div style="left:763px;top:827px;width:3px;height:3px;background:#e4d717;"></div>
<svg style="left:763.0px;top:830px" width="530" height="4"><rect x="5" y="0" width="1" height="3.200" fill="#eff0f1"/><rect x="14" y="0" width="1" height="1.300" fill="#76797c"/><rect x="22" y="0" width="1" height="1.300" fill="#76797c"/><rect x="31" y="0" width="1" height="1.300" fill="#76797c"/><rect x="39" y="0" width="1" height="1.300" fill="#76797c"/><rect x="48" y="0" width="1" height="3.200" fill="#eff0f1"/><rect x="57" y="0" width="1" height="1.300" fill="#76797c"/><rect x="65" y="0" width="1" height="1.300" fill="#76797c"/><rect x="74" y="0" width="1" height="1.300" fill="#76797c"/><rect x="82" y="0" width="1" height="1.300" fill="#76797c"/><rect x="91" y="0" width="1" height="3.200" fill="#eff0f1"/><rect x="100" y="0" width="1" height="1.300" fill="#76797c"/><rect x="108" y="0" width="1" height="1.300" fill="#76797c"/><rect x="117" y="0" width="1" height="1.300" fill="#76797c"/><rect x="126" y="0" width="1" height="1.300" fill="#76797c"/><rect x="134" y="0" width="1" height="3.200" fill="#eff0f1"/><rect x="143" y="0" width="1" height="1.300" fill="#76797c"/><rect x="151" y="0" width="1" height="1.300" fill="#76797c"/><rect x="160" y="0" width="1" height="1.300" fill="#76797c"/><rect x="169" y="0" width="1" height="1.300" fill="#76797c"/><rect x="177" y="0" width="1" height="3.200" fill="#eff0f1"/><rect x="186" y="0" width="1" height="1.300" fill="#76797c"/><rect x="194" y="0" width="1" height="1.300" fill="#76797c"/><rect x="203" y="0" width="1" height="1.300" fill="#76797c"/><rect x="212" y="0" width="1" height="1.300" fill="#76797c"/><rect x="220" y="0" width="1" height="3.200" fill="#eff0f1"/><rect x="229" y="0" width="1" height="1.300" fill="#76797c"/><rect x="237" y="0" width="1" height="1.300" fill="#76797c"/><rect x="246" y="0" width="1" height="1.300" fill="#76797c"/><rect x="255" y="0" width="1" height="1.300" fill="#76797c"/><rect x="263" y="0" width="1" height="3.200" fill="#eff0f1"/><rect x="272" y="0" width="1" height="1.300" fill="#76797c"/><rect x="281" y="0" width="1" height="1.300" fill="#76797c"/><rect x="289" y="0" width="1" height="1.300" fill="#76797c"/><rect x="298" y="0" width="1" height="1.300" fill="#76797c"/><rect x="306" y="0" width="1" height="3.200" fill="#eff0f1"/><rect x="315" y="0" width="1" height="1.300" fill="#76797c"/><rect x="324" y="0" width="1" height="1.300" fill="#76797c"/><rect x="332" y="0" width="1" height="1.300" fill="#76797c"/><rect x="341" y="0" width="1" height="1.300" fill="#76797c"/><rect x="349" y="0" width="1" height="3.200" fill="#eff0f1"/><rect x="358" y="0" width="1" height="1.300" fill="#76797c"/><rect x="367" y="0" width="1" height="1.300" fill="#76797c"/><rect x="375" y="0" width="1" height="1.300" fill="#76797c"/><rect x="384" y="0" width="1" height="1.300" fill="#76797c"/><rect x="392" y="0" width="1" height="3.200" fill="#eff0f1"/><rect x="401" y="0" width="1" height="1.300" fill="#76797c"/><rect x="410" y="0" width="1" height="1.300" fill="#76797c"/><rect x="418" y="0" width="1" height="1.300" fill="#76797c"/><rect x="427" y="0" width="1" height="1.300" fill="#76797c"/><rect x="435" y="0" width="1" height="3.200" fill="#eff0f1"/><rect x="444" y="0" width="1" height="1.300" fill="#76797c"/><rect x="453" y="0" width="1" height="1.300" fill="#76797c"/><rect x="461" y="0" width="1" height="1.300" fill="#76797c"/><rect x="470" y="0" width="1" height="1.300" fill="#76797c"/><rect x="479" y="0" width="1" height="3.200" fill="#eff0f1"/><rect x="487" y="0" width="1" height="1.300" fill="#76797c"/><rect x="496" y="0" width="1" height="1.300" fill="#76797c"/><rect x="504" y="0" width="1" height="1.300" fill="#76797c"/><rect x="513" y="0" width="1" height="1.300" fill="#76797c"/><rect x="522" y="0" width="1" height="3.200" fill="#eff0f1"/></svg>
<span class="t" style="left:763.5px;top:833.07px;font:400 7px/1 'Liberation Sans',sans-serif;color:#dcdcdc;letter-spacing:-0.05px;">-60</span>
<span class="t" style="left:806.55px;top:833.07px;font:400 7px/1 'Liberation Sans',sans-serif;color:#dcdcdc;letter-spacing:-0.05px;">-55</span>
<span class="t" style="left:849.6px;top:833.07px;font:400 7px/1 'Liberation Sans',sans-serif;color:#dcdcdc;letter-spacing:-0.05px;">-50</span>
<span class="t" style="left:892.65px;top:833.07px;font:400 7px/1 'Liberation Sans',sans-serif;color:#dcdcdc;letter-spacing:-0.05px;">-45</span>
<span class="t" style="left:935.7px;top:833.07px;font:400 7px/1 'Liberation Sans',sans-serif;color:#dcdcdc;letter-spacing:-0.05px;">-40</span>
<span class="t" style="left:978.75px;top:833.07px;font:400 7px/1 'Liberation Sans',sans-serif;color:#dcdcdc;letter-spacing:-0.05px;">-35</span>
<span class="t" style="left:1021.8px;top:833.07px;font:400 7px/1 'Liberation Sans',sans-serif;color:#dcdcdc;letter-spacing:-0.05px;">-30</span>
<span class="t" style="left:1064.85px;top:833.07px;font:400 7px/1 'Liberation Sans',sans-serif;color:#dcdcdc;letter-spacing:-0.05px;">-25</span>
<span class="t" style="left:1107.9px;top:833.07px;font:400 7px/1 'Liberation Sans',sans-serif;color:#dcdcdc;letter-spacing:-0.05px;">-20</span>
<span class="t" style="left:1150.95px;top:833.07px;font:400 7px/1 'Liberation Sans',sans-serif;color:#dcdcdc;letter-spacing:-0.05px;">-15</span>
<span class="t" style="left:1194px;top:833.07px;font:400 7px/1 'Liberation Sans',sans-serif;color:#dcdcdc;letter-spacing:-0.05px;">-10</span>
<span class="t" style="left:1238.8px;top:833.07px;font:400 7px/1 'Liberation Sans',sans-serif;color:#dcdcdc;letter-spacing:0.177px;">-5</span>
<span class="t" style="left:1281.29px;top:833.07px;font:400 7px/1 'Liberation Sans',sans-serif;color:#dcdcdc;">0</span>
<div style="left:763px;top:853px;width:443px;height:4px;background:#2a3a75;border-radius:1px;"></div>
<div style="left:1204.5px;top:850.7px;width:18.9px;height:8.6px;background:#d2d2d2;border-radius:3.5px;background:linear-gradient(#dedede,#c4c4c4);"></div>
<svg style="left:1233px;top:847.5px" width="21" height="15" viewBox="0 0 21 15"><path d="M0.800,4.800 H4.200 L9.200,0.600 V14.400 L4.200,10.200 H0.800 Z" fill="#dcdcdc"/>
<path d="M11.800,4.300 a4.600,4.600 0 0 1 0,6.400" fill="none" stroke="#dcdcdc" stroke-width="1.500"/><path d="M14.400,1 a9.400,9.400 0 0 1 0,13" fill="none" stroke="#dcdcdc" stroke-width="1.600"/></svg>
<svg style="left:1264px;top:845px" width="20" height="20" viewBox="-10 -10 20 20"><path d="M-1.42,-5.90 L-0.90,-8.15 L0.90,-8.15 L1.42,-5.90 L3.17,-5.17 L5.13,-6.40 L6.40,-5.13 L5.17,-3.17 L5.90,-1.42 L8.15,-0.90 L8.15,0.90 L5.90,1.42 L5.17,3.17 L6.40,5.13 L5.13,6.40 L3.17,5.17 L1.42,5.90 L0.90,8.15 L-0.90,8.15 L-1.42,5.90 L-3.17,5.17 L-5.13,6.40 L-6.40,5.13 L-5.17,3.17 L-5.90,1.42 L-8.15,0.90 L-8.15,-0.90 L-5.90,-1.42 L-5.17,-3.17 L-6.40,-5.13 L-5.13,-6.40 L-3.17,-5.17 Z M3.12,0 A3.12,3.12 0 1 0 -3.12,0 A3.12,3.12 0 1 0 3.12,0 Z" fill="#dcdcdc" fill-rule="evenodd"/></svg>
<span class="t" style="left:763.6px;top:880.04px;font:400 12px/1 'Liberation Sans',sans-serif;color:#e1e0e1;letter-spacing:0.263px;">Mic/Aux</span>
<span class="t" style="left:1250.3px;top:880.04px;font:400 12px/1 'Liberation Sans',sans-serif;color:#e1e0e1;">0.0 dB</span>
<div style="left:768px;top:896px;width:344.4px;height:3px;background:#42740c;"></div>
<div style="left:1112.4px;top:896px;width:94.71px;height:3px;background:#988f0f;"></div>
<div style="left:1207.11px;top:896px;width:77.89px;height:3px;background:#802004;"></div>
<div style="left:768px;top:896px;width:161.87px;height:3px;background:#84d82b;"></div>
<div style="left:828.27px;top:896px;width:3px;height:3px;background:#22251f;"></div>
<div style="left:975.5px;top:896px;width:3px;height:3px;background:#84d82b;"></div>
<div style="left:763px;top:896px;width:3px;height:3px;background:#84d82b;"></div>
<div style="left:768px;top:900px;width:344.4px;height:3px;background:#42740c;"></div>
<div style="left:1112.4px;top:900px;width:94.71px;height:3px;background:#988f0f;"></div>
<div style="left:1207.11px;top:900px;width:77.89px;height:3px;background:#802004;"></div>
<div style="left:768px;top:900px;width:161.87px;height:3px;background:#84d82b;"></div>
<div style="left:828.27px;top:900px;width:3px;height:3px;background:#22251f;"></div>
<div style="left:975.5px;top:900px;width:3px;height:3px;background:#84d82b;"></div>
<div style="left:763px;top:900px;width:3px;height:3px;background:#84d82b;"></div>
<svg style="left:763.0px;top:903px" width="530" height="4"><rect x="5" y="0" width="1" height="3.200" fill="#eff0f1"/><rect x="14" y="0" width="1" height="1.300" fill="#76797c"/><rect x="22" y="0" width="1" height="1.300" fill="#76797c"/><rect x="31" y="0" width="1" height="1.300" fill="#76797c"/><rect x="39" y="0" width="1" height="1.300" fill="#76797c"/><rect x="48" y="0" width="1" height="3.200" fill="#eff0f1"/><rect x="57" y="0" width="1" height="1.300" fill="#76797c"/><rect x="65" y="0" width="1" height="1.300" fill="#76797c"/><rect x="74" y="0" width="1" height="1.300" fill="#76797c"/><rect x="82" y="0" width="1" height="1.300" fill="#76797c"/><rect x="91" y="0" width="1" height="3.200" fill="#eff0f1"/><rect x="100" y="0" width="1" height="1.300" fill="#76797c"/><rect x="108" y="0" width="1" height="1.300" fill="#76797c"/><rect x="117" y="0" width="1" height="1.300" fill="#76797c"/><rect x="126" y="0" width="1" height="1.300" fill="#76797c"/><rect x="134" y="0" width="1" height="3.200" fill="#eff0f1"/><rect x="143" y="0" width="1" height="1.300" fill="#76797c"/><rect x="151" y="0" width="1" height="1.300" fill="#76797c"/><rect x="160" y="0" width="1" height="1.300" fill="#76797c"/><rect x="169" y="0" width="1" height="1.300" fill="#76797c"/><rect x="177" y="0" width="1" height="3.200" fill="#eff0f1"/><rect x="186" y="0" width="1" height="1.300" fill="#76797c"/><rect x="194" y="0" width="1" height="1.300" fill="#76797c"/><rect x="203" y="0" width="1" height="1.300" fill="#76797c"/><rect x="212" y="0" width="1" height="1.300" fill="#76797c"/><rect x="220" y="0" width="1" height="3.200" fill="#eff0f1"/><rect x="229" y="0" width="1" height="1.300" fill="#76797c"/><rect x="237" y="0" width="1" height="1.300" fill="#76797c"/><rect x="246" y="0" width="1" height="1.300" fill="#76797c"/><rect x="255" y="0" width="1" height="1.300" fill="#76797c"/><rect x="263" y="0" width="1" height="3.200" fill="#eff0f1"/><rect x="272" y="0" width="1" height="1.300" fill="#76797c"/><rect x="281" y="0" width="1" height="1.300" fill="#76797c"/><rect x="289" y="0" width="1" height="1.300" fill="#76797c"/><rect x="298" y="0" width="1" height="1.300" fill="#76797c"/><rect x="306" y="0" width="1" height="3.200" fill="#eff0f1"/><rect x="315" y="0" width="1" height="1.300" fill="#76797c"/><rect x="324" y="0" width="1" height="1.300" fill="#76797c"/><rect x="332" y="0" width="1" height="1.300" fill="#76797c"/><rect x="341" y="0" width="1" height="1.300" fill="#76797c"/><rect x="349" y="0" width="1" height="3.200" fill="#eff0f1"/><rect x="358" y="0" width="1" height="1.300" fill="#76797c"/><rect x="367" y="0" width="1" height="1.300" fill="#76797c"/><rect x="375" y="0" width="1" height="1.300" fill="#76797c"/><rect x="384" y="0" width="1" height="1.300" fill="#76797c"/><rect x="392" y="0" width="1" height="3.200" fill="#eff0f1"/><rect x="401" y="0" width="1" height="1.300" fill="#76797c"/><rect x="410" y="0" width="1" height="1.300" fill="#76797c"/><rect x="418" y="0" width="1" height="1.300" fill="#76797c"/><rect x="427" y="0" width="1" height="1.300" fill="#76797c"/><rect x="435" y="0" width="1" height="3.200" fill="#eff0f1"/><rect x="444" y="0" width="1" height="1.300" fill="#76797c"/><rect x="453" y="0" width="1" height="1.300" fill="#76797c"/><rect x="461" y="0" width="1" height="1.300" fill="#76797c"/><rect x="470" y="0" width="1" height="1.300" fill="#76797c"/><rect x="479" y="0" width="1" height="3.200" fill="#eff0f1"/><rect x="487" y="0" width="1" height="1.300" fill="#76797c"/><rect x="496" y="0" width="1" height="1.300" fill="#76797c"/><rect x="504" y="0" width="1" height="1.300" fill="#76797c"/><rect x="513" y="0" width="1" height="1.300" fill="#76797c"/><rect x="522" y="0" width="1" height="3.200" fill="#eff0f1"/></svg>
<span class="t" style="left:763.5px;top:906.07px;font:400 7px/1 'Liberation Sans',sans-serif;color:#dcdcdc;letter-spacing:-0.05px;">-60</span>
<span class="t" style="left:806.55px;top:906.07px;font:400 7px/1 'Liberation Sans',sans-serif;color:#dcdcdc;letter-spacing:-0.05px;">-55</span>
<span class="t" style="left:849.6px;top:906.07px;font:400 7px/1 'Liberation Sans',sans-serif;color:#dcdcdc;letter-spacing:-0.05px;">-50</span>
<span class="t" style="left:892.65px;top:906.07px;font:400 7px/1 'Liberation Sans',sans-serif;color:#dcdcdc;letter-spacing:-0.05px;">-45</span>
<span class="t" style="left:935.7px;top:906.07px;font:400 7px/1 'Liberation Sans',sans-serif;color:#dcdcdc;letter-spacing:-0.05px;">-40</span>
<span class="t" style="left:978.75px;top:906.07px;font:400 7px/1 'Liberation Sans',sans-serif;color:#dcdcdc;letter-spacing:-0.05px;">-35</span>
<span class="t" style="left:1021.8px;top:906.07px;font:400 7px/1 'Liberation Sans',sans-serif;color:#dcdcdc;letter-spacing:-0.05px;">-30</span>
<span class="t" style="left:1064.85px;top:906.07px;font:400 7px/1 'Liberation Sans',sans-serif;color:#dcdcdc;letter-spacing:-0.05px;">-25</span>
<span class="t" style="left:1107.9px;top:906.07px;font:400 7px/1 'Liberation Sans',sans-serif;color:#dcdcdc;letter-spacing:-0.05px;">-20</span>
<span class="t" style="left:1150.95px;top:906.07px;font:400 7px/1 'Liberation Sans',sans-serif;color:#dcdcdc;letter-spacing:-0.05px;">-15</span>
<span class="t" style="left:1194px;top:906.07px;font:400 7px/1 'Liberation Sans',sans-serif;color:#dcdcdc;letter-spacing:-0.05px;">-10</span>
<span class="t" style="left:1238.8px;top:906.07px;font:400 7px/1 'Liberation Sans',sans-serif;color:#dcdcdc;letter-spacing:0.177px;">-5</span>
<span class="t" style="left:1281.29px;top:906.07px;font:400 7px/1 'Liberation Sans',sans-serif;color:#dcdcdc;">0</span>
<div style="left:763px;top:926px;width:443px;height:4px;background:#2a3a75;border-radius:1px;"></div>
<div style="left:1204.5px;top:923.7px;width:18.9px;height:8.6px;background:#d2d2d2;border-radius:3.5px;background:linear-gradient(#dedede,#c4c4c4);"></div>
<svg style="left:1233px;top:920.5px" width="21" height="15" viewBox="0 0 21 15"><path d="M0.800,4.800 H4.200 L9.200,0.600 V14.400 L4.200,10.200 H0.800 Z" fill="#dcdcdc"/>
<path d="M11.800,4.300 a4.600,4.600 0 0 1 0,6.400" fill="none" stroke="#dcdcdc" stroke-width="1.500"/><path d="M14.400,1 a9.400,9.400 0 0 1 0,13" fill="none" stroke="#dcdcdc" stroke-width="1.600"/></svg>
<svg style="left:1264px;top:918px" width="20" height="20" viewBox="-10 -10 20 20"><path d="M-1.42,-5.90 L-0.90,-8.15 L0.90,-8.15 L1.42,-5.90 L3.17,-5.17 L5.13,-6.40 L6.40,-5.13 L5.17,-3.17 L5.90,-1.42 L8.15,-0.90 L8.15,0.90 L5.90,1.42 L5.17,3.17 L6.40,5.13 L5.13,6.40 L3.17,5.17 L1.42,5.90 L0.90,8.15 L-0.90,8.15 L-1.42,5.90 L-3.17,5.17 L-5.13,6.40 L-6.40,5.13 L-5.17,3.17 L-5.90,1.42 L-8.15,0.90 L-8.15,-0.90 L-5.90,-1.42 L-5.17,-3.17 L-6.40,-5.13 L-5.13,-6.40 L-3.17,-5.17 Z M3.12,0 A3.12,3.12 0 1 0 -3.12,0 A3.12,3.12 0 1 0 3.12,0 Z" fill="#dcdcdc" fill-rule="evenodd"/></svg>
<div style="left:1296px;top:801.5px;width:6.2px;height:213.5px;background:#2f2f2f;"></div>
<div style="left:1317px;top:804px;width:196px;height:27px;background:#28282a;border-radius:2px;"></div>
<div style="left:1492.2px;top:805px;width:1px;height:25px;background:#222224;"></div>
<span class="t" style="left:1327.5px;top:812.14px;font:400 12px/1 'Liberation Sans',sans-serif;color:#e1e0e1;letter-spacing:-0.303px;">Fade</span>
<svg style="left:1498px;top:809.5px" width="10" height="16" viewBox="-5 -8 10 16"><path d="M-3,-3 L0,-6 L3,-3 M-3,3 L0,6 L3,3" fill="none" stroke="#b0b0b0" stroke-width="1"/></svg>
<svg style="left:1518px;top:807.3px" width="20" height="20" viewBox="-10 -10 20 20"><path d="M-1.42,-5.90 L-0.90,-8.15 L0.90,-8.15 L1.42,-5.90 L3.17,-5.17 L5.13,-6.40 L6.40,-5.13 L5.17,-3.17 L5.90,-1.42 L8.15,-0.90 L8.15,0.90 L5.90,1.42 L5.17,3.17 L6.40,5.13 L5.13,6.40 L3.17,5.17 L1.42,5.90 L0.90,8.15 L-0.90,8.15 L-1.42,5.90 L-3.17,5.17 L-5.13,6.40 L-6.40,5.13 L-5.17,3.17 L-5.90,1.42 L-8.15,0.90 L-8.15,-0.90 L-5.90,-1.42 L-5.17,-3.17 L-6.40,-5.13 L-5.13,-6.40 L-3.17,-5.17 Z M3.12,0 A3.12,3.12 0 1 0 -3.12,0 A3.12,3.12 0 1 0 3.12,0 Z" fill="#dcdcdc" fill-rule="evenodd"/></svg>
<span class="t" style="left:1317.5px;top:840.84px;font:400 12px/1 'Liberation Sans',sans-serif;color:#e1e0e1;letter-spacing:0.352px;">Duration</span>
<div style="left:1370px;top:833px;width:152.5px;height:27px;background:#0b0a0b;"></div>
<span class="t" style="left:1374.5px;top:840.84px;font:400 12px/1 'Liberation Sans',sans-serif;color:#e1e0e1;letter-spacing:0.207px;">300 ms</span>
<svg style="left:1524px;top:834px" width="16" height="26" viewBox="0 0 16 26"><path d="M1.400,9.400 L7.600,3 L13.800,9.400 M1.400,16.200 L7.600,22.600 L13.800,16.200" fill="none" stroke="#dcdcdc" stroke-width="1.400"/></svg>
<div style="left:1552px;top:805px;width:156px;height:31px;background:#581624;box-sizing:border-box;border:1px solid #7d152a;border-radius:1px;"></div>
<span class="t" style="left:1586.75px;top:814.74px;font:400 12px/1 'Liberation Sans',sans-serif;color:#e1e0e1;letter-spacing:0.28px;">Stop Streaming</span>
<div style="left:1552px;top:840px;width:156px;height:31px;background:#162458;box-sizing:border-box;border:1px solid #233166;border-radius:1px;"></div>
<span class="t" style="left:1587px;top:849.74px;font:400 12px/1 'Liberation Sans',sans-serif;color:#e1e0e1;letter-spacing:0.181px;">Start Recording</span>
<div style="left:1552px;top:875px;width:156px;height:31px;background:#162458;box-sizing:border-box;border:1px solid #233166;border-radius:1px;"></div>
<span class="t" style="left:1573px;top:884.74px;font:400 12px/1 'Liberation Sans',sans-serif;color:#e1e0e1;letter-spacing:0.282px;">Start Virtual Camera</span>
<div style="left:1552px;top:910px;width:156px;height:31px;background:#162458;box-sizing:border-box;border:1px solid #233166;border-radius:1px;"></div>
<span class="t" style="left:1595px;top:919.74px;font:400 12px/1 'Liberation Sans',sans-serif;color:#e1e0e1;letter-spacing:0.249px;">Studio Mode</span>
<div style="left:1552px;top:945px;width:156px;height:31px;background:#162458;box-sizing:border-box;border:1px solid #233166;border-radius:1px;"></div>
<span class="t" style="left:1607.5px;top:954.74px;font:400 12px/1 'Liberation Sans',sans-serif;color:#e1e0e1;letter-spacing:0.219px;">Settings</span>
<div style="left:1552px;top:980px;width:156px;height:31px;background:#162458;box-sizing:border-box;border:1px solid #233166;border-radius:1px;"></div>
<span class="t" style="left:1620.25px;top:989.74px;font:400 12px/1 'Liberation Sans',sans-serif;color:#e1e0e1;letter-spacing:-0.147px;">Exit</span>
<span class="t" style="left:1072.3px;top:1024.04px;font:400 12px/1 'Liberation Sans',sans-serif;color:#e1e0e1;letter-spacing:0.132px;">Dropped Frames 0 (0.0%)</span>
<svg style="left:1219px;top:1020.500px" width="22" height="17" viewBox="-11 -8.500 22 17"><circle r="3.300" fill="#5b8fe8"/><g fill="none" stroke-width="1.700"><path d="M-4.200,-4.400 a6,6 0 0 0 0,8.800" stroke="#4a7ad8"/><path d="M4.200,-4.400 a6,6 0 0 1 0,8.800" stroke="#4a7ad8"/><path d="M-6.800,-6.400 a9.200,9.200 0 0 0 0,12.800" stroke="#3f69c4"/><path d="M6.800,-6.400 a9.200,9.200 0 0 1 0,12.800" stroke="#3f69c4"/></g></svg>
<span class="t" style="left:1246px;top:1024.04px;font:400 12px/1 'Liberation Sans',sans-serif;color:#e1e0e1;letter-spacing:-0.2px;">LIVE: 00:01:08</span>
<svg style="left:1333px;top:1023.500px" width="11" height="11"><circle cx="5.500" cy="5.500" r="4.800" fill="#b4b4b4"/></svg>
<span class="t" style="left:1355.5px;top:1024.04px;font:400 12px/1 'Liberation Sans',sans-serif;color:#e1e0e1;letter-spacing:-0.297px;">REC: 00:00:00</span>
<span class="t" style="left:1457.5px;top:1024.04px;font:400 12px/1 'Liberation Sans',sans-serif;color:#e1e0e1;letter-spacing:-0.098px;">CPU: 1.6%, 60.00 fps</span>
<div style="left:1597px;top:1019px;width:20px;height:20px;background:#00ff00;"></div>
<span class="t" style="left:1633px;top:1024.04px;font:400 12px/1 'Liberation Sans',sans-serif;color:#e1e0e1;letter-spacing:0.171px;">kb/s: 6230</span>
<svg style="left:1697px;top:1025px" width="16" height="16" viewBox="0 0 16 16"><g stroke="#8c8c8c" stroke-width="1"><path d="M15.500,1 L1,15.500"/><path d="M15.500,5 L5,15.500"/><path d="M15.500,9 L9,15.500"/><path d="M15.500,13 L13,15.500"/></g></svg>
</body></html>
